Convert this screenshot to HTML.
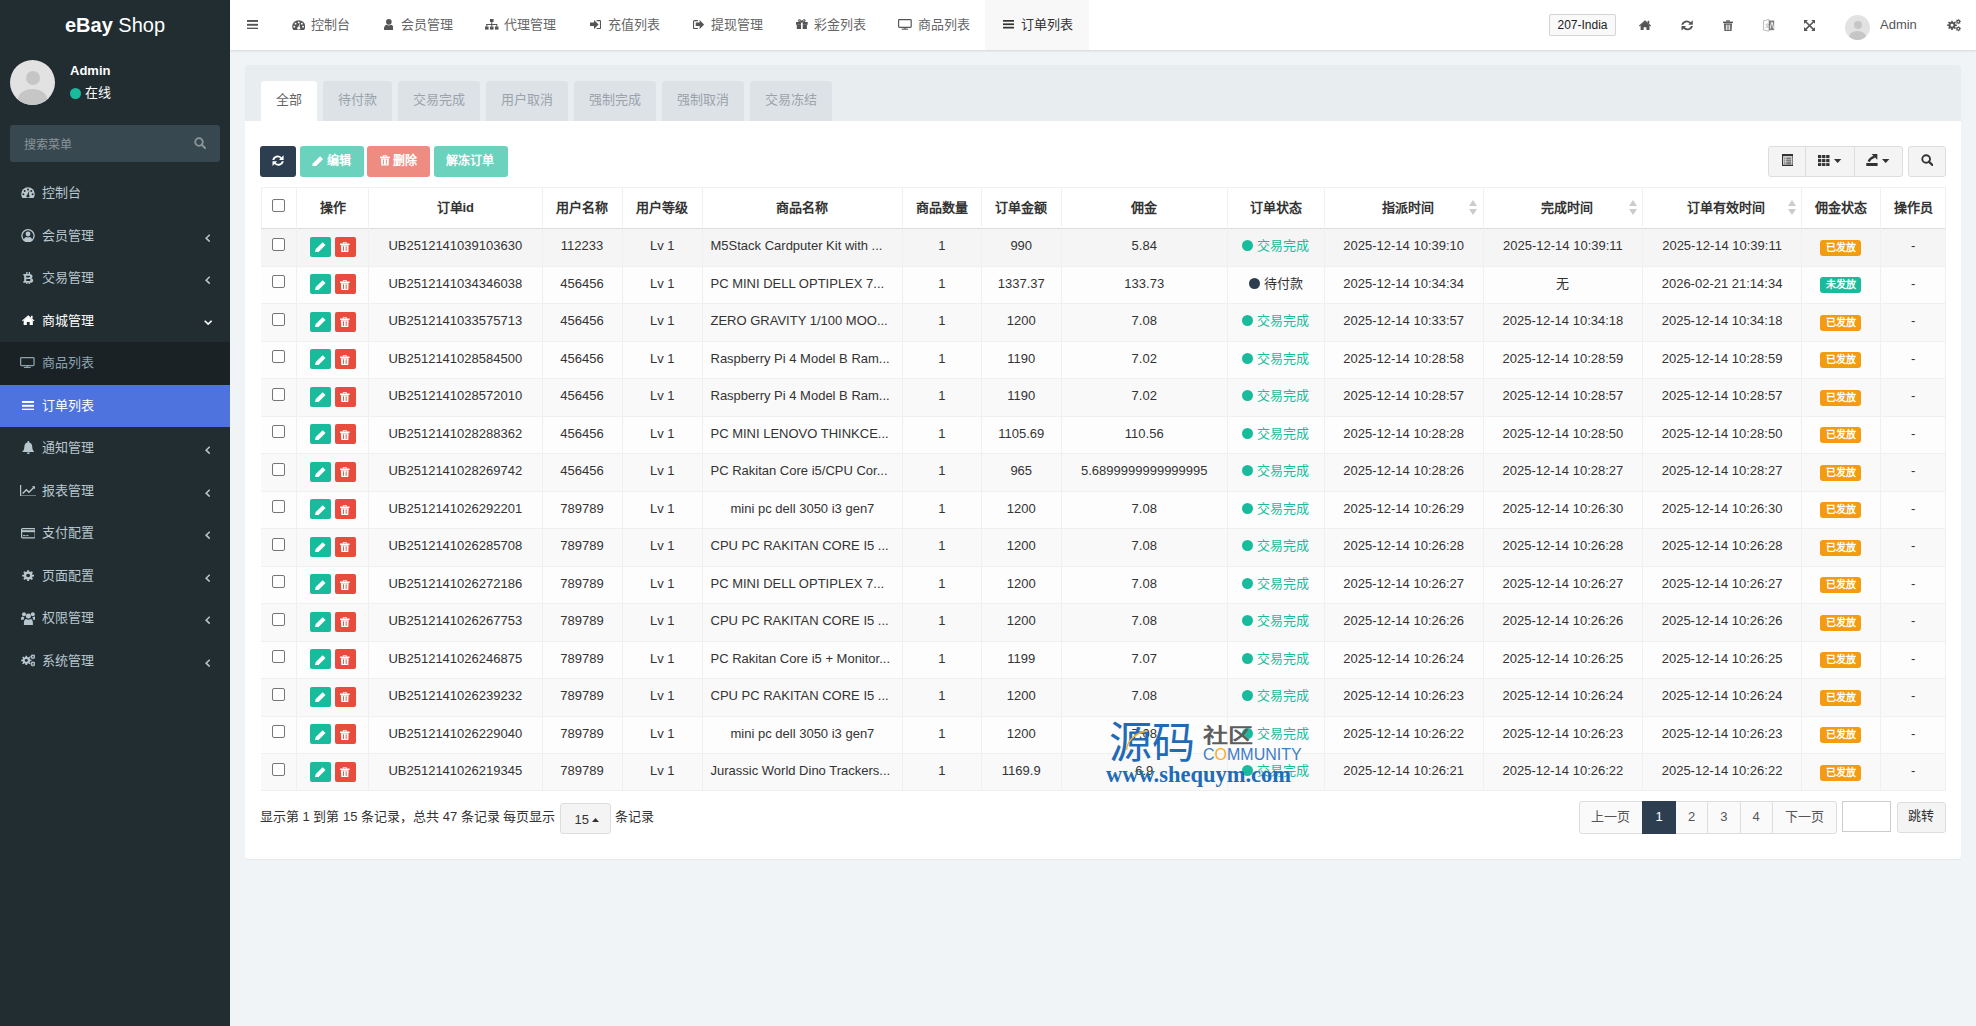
<!DOCTYPE html><html lang="zh-CN"><head><meta charset="utf-8"><style>
*{box-sizing:border-box;margin:0;padding:0}
html,body{width:1976px;height:1026px;overflow:hidden}
body{font-family:"Liberation Sans",sans-serif;font-size:13px;color:#333;background:#f1f4f6;position:relative}
.abs{position:absolute}
#sb{position:absolute;left:0;top:0;width:230px;height:1026px;background:#222d32}
.logo{position:absolute;left:0;top:0;width:230px;height:50px;line-height:50px;text-align:center;color:#fff;font-size:20px}
.mi{position:absolute;left:0;width:230px;height:42.5px;color:#b8c7ce;font-size:13px}
.mi .t{position:absolute;left:42px;top:0;line-height:42.5px}
.mi .ic{position:absolute;left:21px;top:0;height:42.5px;display:flex;align-items:center}
.mi .ar{position:absolute;left:204px;top:0;height:42.5px;display:flex;align-items:center}
#hd{position:absolute;left:230px;top:0;width:1746px;height:50px;background:#fff;box-shadow:0 1px 2px rgba(0,0,0,.12)}
.nv{position:absolute;top:0;height:50px;line-height:50px;color:#666;font-size:13px;white-space:nowrap}
.nvi{position:absolute;top:0;height:50px;display:flex;align-items:center}
#panel{position:absolute;left:245px;top:65px;width:1716px;height:794px;background:#fff;border-radius:3px;box-shadow:0 1px 1px rgba(0,0,0,.05)}
#ph{position:absolute;left:245px;top:65px;width:1716px;height:56px;background:#e8edf0;border-radius:3px 3px 0 0}
.tab{position:absolute;top:81px;height:40px;line-height:38px;background:#dde2e7;color:#9aa3ab;font-size:13px;text-align:center;border-radius:3px 3px 0 0}
.tab.on{background:#fff;color:#666}
.btn{position:absolute;top:146px;height:31px;line-height:30px;border-radius:3px;color:#fff;font-size:13px;text-align:center;white-space:nowrap}
.cell{position:absolute;text-align:center;white-space:nowrap;overflow:hidden}
.th{font-weight:bold;color:#333}
.tb{top:146px;height:31px;line-height:30px;color:#fff;font-size:12px;font-weight:bold;white-space:nowrap}
.pg{position:absolute;top:801px;height:33px;line-height:29px;text-align:center;background:#fafafa;border:1px solid #ddd;color:#555;margin-left:-1px}
</style></head><body>
<div id="sb">
<div class="logo"><b>eBay</b> Shop</div>
<div class="abs" style="left:10px;top:60px;width:45px;height:45px;border-radius:50%;background:#e2e2e2;overflow:hidden"><div class="abs" style="left:15.5px;top:10.5px;width:14px;height:14px;border-radius:50%;background:#c6c6c6"></div><div class="abs" style="left:8px;top:29px;width:29px;height:20px;border-radius:50%;background:#c6c6c6"></div></div>
<div class="abs" style="left:70px;top:62px;color:#fff;font-weight:bold;font-size:13px;line-height:18px">Admin</div>
<div class="abs" style="left:70px;top:88px;width:11px;height:11px;border-radius:50%;background:#18bc9c"></div>
<div class="abs" style="left:85px;top:84px;color:#fff;font-size:13px;line-height:18px">在线</div>
<div class="abs" style="left:10px;top:125px;width:210px;height:37px;background:#374850;border-radius:3px"></div>
<div class="abs" style="left:24px;top:135.5px;color:#8b9499;font-size:12px;line-height:18px">搜索菜单</div>
<div class="abs" style="left:194px;top:137px"><svg width="12" height="12" viewBox="0 0 12 12" ><circle cx="5" cy="5" r="3.8" fill="none" stroke="#8b9499" stroke-width="1.8"/><path d="M7.8 7.8L11 11" stroke="#8b9499" stroke-width="2" stroke-linecap="round"/></svg></div>
<div class="mi" style="top:172.0px;color:#b8c7ce">
<div class="t">控制台</div>
</div>
<svg class="abs" style="left:21px;top:187px" width="14" height="11" viewBox="0 0 14 11" preserveAspectRatio="none"><path d="M7 0.3A6.8 6.8 0 0 0 0.2 7.1c0 1.45.45 2.8 1.2 3.9h11.2c.75-1.1 1.2-2.45 1.2-3.9A6.8 6.8 0 0 0 7 0.3z" fill="#b8c7ce"/><g fill="#222d32"><circle cx="2.4" cy="7.3" r="1"/><circle cx="3.7" cy="4" r="1"/><circle cx="7" cy="2.6" r="1"/><circle cx="10.3" cy="4" r="1"/><circle cx="11.6" cy="7.3" r="1"/><path d="M8.3 3.2L7.9 8.6L6.1 8.6Z"/><circle cx="7" cy="9" r="1.6"/></g></svg>
<div class="mi" style="top:214.5px;color:#b8c7ce">
<div class="t">会员管理</div>
</div>
<svg class="abs" style="left:21px;top:228.5px" width="14" height="13.5" viewBox="0 0 14 13.5" preserveAspectRatio="none"><circle cx="7" cy="6.75" r="6.1" fill="none" stroke="#b8c7ce" stroke-width="1.3"/><circle cx="7" cy="5" r="2.4" fill="#b8c7ce"/><path d="M2.6 10.8C3.2 8.9 4.6 8 5.3 7.9 5.8 8.2 6.4 8.4 7 8.4S8.2 8.2 8.7 7.9C9.4 8 10.8 8.9 11.4 10.8 10.3 12 8.7 12.9 7 12.9S3.7 12 2.6 10.8Z" fill="#b8c7ce"/></svg>
<svg class="abs" style="left:205px;top:233.8px" width="5.4" height="8.3" viewBox="0 0 5.4 8.3"><path d="M4.7 .7L1.1 4.15L4.7 7.6" fill="none" stroke="#b8c7ce" stroke-width="1.5"/></svg>
<div class="mi" style="top:257.0px;color:#b8c7ce">
<div class="t">交易管理</div>
</div>
<svg class="abs" style="left:23px;top:271.6px" width="10.5" height="12.6" viewBox="0 0 10.5 12.6" preserveAspectRatio="none"><path fill="#b8c7ce" fill-rule="evenodd" d="M0.3 2H6.5C8.6 2 9.5 3.1 9.5 4.4C9.5 5.3 9 5.9 8.2 6.2C9.3 6.5 10.2 7.3 10.2 8.5C10.2 10 9 10.8 6.8 10.8H0.3V9.3H1.2V3.5H0.3Z M3.2 3.7V5.5H6C6.6 5.5 7.1 5.2 7.1 4.6C7.1 4 6.6 3.7 6 3.7Z M3.2 7.1V9.1H6.3C7 9.1 7.5 8.8 7.5 8.1C7.5 7.4 7 7.1 6.3 7.1Z"/><g fill="#b8c7ce"><rect x="3.2" y="0" width="1.3" height="2.2"/><rect x="5.7" y="0" width="1.3" height="2.2"/><rect x="3.2" y="10.6" width="1.3" height="2"/><rect x="5.7" y="10.6" width="1.3" height="2"/></g></svg>
<svg class="abs" style="left:205px;top:276.3px" width="5.4" height="8.3" viewBox="0 0 5.4 8.3"><path d="M4.7 .7L1.1 4.15L4.7 7.6" fill="none" stroke="#b8c7ce" stroke-width="1.5"/></svg>
<div class="mi" style="top:299.5px;color:#fff">
<div class="t">商城管理</div>
</div>
<svg class="abs" style="left:22px;top:315px" width="12.5" height="10" viewBox="0 0 12 10.4" preserveAspectRatio="none"><g fill="#fff"><path d="M6 1.6L1.6 5.4V10.4H4.6V7.2H7.4V10.4H10.4V5.4Z"/><path d="M0 5.6L6 0.3L12 5.6L11.3 6.4L6 1.8L0.7 6.4Z"/><rect x="8.6" y="0.8" width="1.6" height="2.8"/></g></svg>
<svg class="abs" style="left:203.8px;top:319.8px" width="8.3" height="5" viewBox="0 0 8.3 5"><path d="M.7 .7L4.15 4.1L7.6 .7" fill="none" stroke="#fff" stroke-width="1.6"/></svg>
<div class="mi" style="top:342.0px;background:#1a2226;color:#8aa4af">
<div class="t">商品列表</div>
</div>
<svg class="abs" style="left:20.2px;top:357px" width="14.7" height="11" viewBox="0 0 14 11" preserveAspectRatio="none"><rect x="0.6" y="0.6" width="12.8" height="8" rx="0.8" fill="none" stroke="#8aa4af" stroke-width="1.2"/><rect x="6.4" y="8.6" width="1.2" height="1.6" fill="#8aa4af"/><rect x="3.8" y="9.9" width="6.4" height="1.1" fill="#8aa4af"/></svg>
<div class="mi" style="top:384.5px;background:#4e73df;color:#fff">
<div class="t">订单列表</div>
</div>
<svg class="abs" style="left:21.8px;top:400.6px" width="12.3" height="9.6" viewBox="0 0 12 10" preserveAspectRatio="none"><g fill="#fff"><rect x="0" y="0" width="12" height="2"/><rect x="0" y="4" width="12" height="2"/><rect x="0" y="8" width="12" height="2"/></g></svg>
<div class="mi" style="top:427.0px;color:#b8c7ce">
<div class="t">通知管理</div>
</div>
<svg class="abs" style="left:21.8px;top:440.7px" width="12.6" height="13.2" viewBox="0 0 12.6 13" preserveAspectRatio="none"><path d="M6.3 1.2C3.6 1.2 2.3 3.4 2.3 6.2 2.3 8.6 1.4 9.6 0.2 10.8H12.4C11.2 9.6 10.3 8.6 10.3 6.2 10.3 3.4 9 1.2 6.3 1.2Z" fill="#b8c7ce"/><circle cx="6.3" cy="1" r="1" fill="#b8c7ce"/><path d="M4.8 11.3A1.5 1.5 0 0 0 7.8 11.3Z" fill="#b8c7ce"/></svg>
<svg class="abs" style="left:205px;top:446.3px" width="5.4" height="8.3" viewBox="0 0 5.4 8.3"><path d="M4.7 .7L1.1 4.15L4.7 7.6" fill="none" stroke="#b8c7ce" stroke-width="1.5"/></svg>
<div class="mi" style="top:469.5px;color:#b8c7ce">
<div class="t">报表管理</div>
</div>
<svg class="abs" style="left:20px;top:484.6px" width="16" height="11.4" viewBox="0 0 16 11.6" preserveAspectRatio="none"><path d="M.6 0V11.2H16" fill="none" stroke="#b8c7ce" stroke-width="1.2"/><path d="M2.6 8.6L6.4 4.8L9 7.4L14 2.4" fill="none" stroke="#b8c7ce" stroke-width="1.4"/><path d="M11.8 1.2H15V4.4Z" fill="#b8c7ce"/></svg>
<svg class="abs" style="left:205px;top:488.8px" width="5.4" height="8.3" viewBox="0 0 5.4 8.3"><path d="M4.7 .7L1.1 4.15L4.7 7.6" fill="none" stroke="#b8c7ce" stroke-width="1.5"/></svg>
<div class="mi" style="top:512.0px;color:#b8c7ce">
<div class="t">支付配置</div>
</div>
<svg class="abs" style="left:20.7px;top:528.1px" width="14.8" height="10.5" viewBox="0 0 14.8 10.6" preserveAspectRatio="none"><rect x=".6" y=".6" width="13.6" height="9.4" rx="1" fill="none" stroke="#b8c7ce" stroke-width="1.2"/><rect x="0.6" y="2.2" width="13.6" height="2" fill="#b8c7ce"/><rect x="2" y="7.2" width="2.6" height="1" fill="#b8c7ce"/><rect x="5.3" y="7.2" width="2.2" height="1" fill="#b8c7ce"/></svg>
<svg class="abs" style="left:205px;top:531.3px" width="5.4" height="8.3" viewBox="0 0 5.4 8.3"><path d="M4.7 .7L1.1 4.15L4.7 7.6" fill="none" stroke="#b8c7ce" stroke-width="1.5"/></svg>
<div class="mi" style="top:554.5px;color:#b8c7ce">
<div class="t">页面配置</div>
</div>
<svg class="abs" style="left:21.8px;top:569.8px" width="12.3" height="11.2" viewBox="0 0 12 12" preserveAspectRatio="none"><path fill="#b8c7ce" fill-rule="evenodd" d="M10.28 4.97 L11.83 5.08 L11.83 6.92 L10.28 7.03 L9.75 8.30 L10.77 9.47 L9.47 10.77 L8.30 9.75 L7.03 10.28 L6.92 11.83 L5.08 11.83 L4.97 10.28 L3.70 9.75 L2.53 10.77 L1.23 9.47 L2.25 8.30 L1.72 7.03 L0.17 6.92 L0.17 5.08 L1.72 4.97 L2.25 3.70 L1.23 2.53 L2.53 1.23 L3.70 2.25 L4.97 1.72 L5.08 0.17 L6.92 0.17 L7.03 1.72 L8.30 2.25 L9.47 1.23 L10.77 2.53 L9.75 3.70Z M7.90 6.00 A1.9 1.9 0 1 0 4.10 6.00 A1.9 1.9 0 1 0 7.90 6.00Z"/></svg>
<svg class="abs" style="left:205px;top:573.8px" width="5.4" height="8.3" viewBox="0 0 5.4 8.3"><path d="M4.7 .7L1.1 4.15L4.7 7.6" fill="none" stroke="#b8c7ce" stroke-width="1.5"/></svg>
<div class="mi" style="top:597.0px;color:#b8c7ce">
<div class="t">权限管理</div>
</div>
<svg class="abs" style="left:20.7px;top:611.9px" width="14.8" height="13.1" viewBox="0 0 14.8 13" preserveAspectRatio="none"><g fill="#b8c7ce"><circle cx="3" cy="2.2" r="2"/><circle cx="11.8" cy="2.2" r="2"/><path d="M0 6.8C0 5.3.8 4.6 1.6 4.5 2.2 5 2.6 5.1 3.4 5.1 3 5.6 2.8 6.2 2.8 7.6H0Z"/><path d="M14.8 6.8C14.8 5.3 14 4.6 13.2 4.5 12.6 5 12.2 5.1 11.4 5.1 11.8 5.6 12 6.2 12 7.6H14.8Z"/><circle cx="7.4" cy="4" r="2.5"/><path d="M2.9 13V10.6C2.9 8.4 4 7.1 5.2 6.9 5.8 7.4 6.6 7.7 7.4 7.7S9 7.4 9.6 6.9C10.8 7.1 11.9 8.4 11.9 10.6V13Z"/></g></svg>
<svg class="abs" style="left:205px;top:616.3px" width="5.4" height="8.3" viewBox="0 0 5.4 8.3"><path d="M4.7 .7L1.1 4.15L4.7 7.6" fill="none" stroke="#b8c7ce" stroke-width="1.5"/></svg>
<div class="mi" style="top:639.5px;color:#b8c7ce">
<div class="t">系统管理</div>
</div>
<svg class="abs" style="left:20.7px;top:654px" width="14.8" height="12.6" viewBox="0 0 14 13" preserveAspectRatio="none"><path fill="#b8c7ce" fill-rule="evenodd" d="M8.50 5.76 L9.84 5.83 L9.84 7.37 L8.50 7.44 L8.07 8.48 L8.96 9.48 L7.88 10.56 L6.88 9.67 L5.84 10.10 L5.77 11.44 L4.23 11.44 L4.16 10.10 L3.12 9.67 L2.12 10.56 L1.04 9.48 L1.93 8.48 L1.50 7.44 L0.16 7.37 L0.16 5.83 L1.50 5.76 L1.93 4.72 L1.04 3.72 L2.12 2.64 L3.12 3.53 L4.16 3.10 L4.23 1.76 L5.77 1.76 L5.84 3.10 L6.88 3.53 L7.88 2.64 L8.96 3.72 L8.07 4.72Z M6.50 6.60 A1.5 1.5 0 1 0 3.50 6.60 A1.5 1.5 0 1 0 6.50 6.60Z"/><path fill="#b8c7ce" fill-rule="evenodd" d="M13.15 2.36 L13.97 2.38 L13.97 3.22 L13.15 3.24 L12.92 3.79 L13.48 4.39 L12.89 4.98 L12.29 4.42 L11.74 4.65 L11.72 5.47 L10.88 5.47 L10.86 4.65 L10.31 4.42 L9.71 4.98 L9.12 4.39 L9.68 3.79 L9.45 3.24 L8.63 3.22 L8.63 2.38 L9.45 2.36 L9.68 1.81 L9.12 1.21 L9.71 0.62 L10.31 1.18 L10.86 0.95 L10.88 0.13 L11.72 0.13 L11.74 0.95 L12.29 1.18 L12.89 0.62 L13.48 1.21 L12.92 1.81Z M12.10 2.80 A0.8 0.8 0 1 0 10.50 2.80 A0.8 0.8 0 1 0 12.10 2.80Z"/><path fill="#b8c7ce" fill-rule="evenodd" d="M13.15 9.76 L13.97 9.78 L13.97 10.62 L13.15 10.64 L12.92 11.19 L13.48 11.79 L12.89 12.38 L12.29 11.82 L11.74 12.05 L11.72 12.87 L10.88 12.87 L10.86 12.05 L10.31 11.82 L9.71 12.38 L9.12 11.79 L9.68 11.19 L9.45 10.64 L8.63 10.62 L8.63 9.78 L9.45 9.76 L9.68 9.21 L9.12 8.61 L9.71 8.02 L10.31 8.58 L10.86 8.35 L10.88 7.53 L11.72 7.53 L11.74 8.35 L12.29 8.58 L12.89 8.02 L13.48 8.61 L12.92 9.21Z M12.10 10.20 A0.8 0.8 0 1 0 10.50 10.20 A0.8 0.8 0 1 0 12.10 10.20Z"/></svg>
<svg class="abs" style="left:205px;top:658.8px" width="5.4" height="8.3" viewBox="0 0 5.4 8.3"><path d="M4.7 .7L1.1 4.15L4.7 7.6" fill="none" stroke="#b8c7ce" stroke-width="1.5"/></svg>
</div>
<div id="hd"></div>
<svg class="abs" style="left:246.9px;top:19.7px" width="11.3" height="9.6" viewBox="0 0 12 10" preserveAspectRatio="none"><g fill="#555"><rect x="0" y="0" width="12" height="2"/><rect x="0" y="4" width="12" height="2"/><rect x="0" y="8" width="12" height="2"/></g></svg>
<div class="abs" style="left:985px;top:0;width:103.5px;height:50px;background:#f8f8f8"></div>
<svg class="abs" style="left:291.8px;top:19.7px" width="13.4" height="10.1" viewBox="0 0 14 11" preserveAspectRatio="none"><path d="M7 0.3A6.8 6.8 0 0 0 0.2 7.1c0 1.45.45 2.8 1.2 3.9h11.2c.75-1.1 1.2-2.45 1.2-3.9A6.8 6.8 0 0 0 7 0.3z" fill="#555"/><g fill="#fff"><circle cx="2.4" cy="7.3" r="1"/><circle cx="3.7" cy="4" r="1"/><circle cx="7" cy="2.6" r="1"/><circle cx="10.3" cy="4" r="1"/><circle cx="11.6" cy="7.3" r="1"/><path d="M8.3 3.2L7.9 8.6L6.1 8.6Z"/><circle cx="7" cy="9" r="1.6"/></g></svg>
<div class="nv" style="left:311px;color:#666">控制台</div>
<svg class="abs" style="left:383.7px;top:18.9px" width="9.7" height="10.9" viewBox="0 0 10 11" preserveAspectRatio="none"><g fill="#555"><circle cx="5" cy="2.9" r="2.9"/><path d="M0 11V9.6C0 7.4 1.3 6 2.9 5.8 3.5 6.3 4.2 6.5 5 6.5S6.5 6.3 7.1 5.8C8.7 6 10 7.4 10 9.6V11Z"/></g></svg>
<div class="nv" style="left:401px;color:#666">会员管理</div>
<svg class="abs" style="left:485.3px;top:19.1px" width="13.5" height="10.6" viewBox="0 0 13.6 10.6" preserveAspectRatio="none"><g fill="#555"><rect x="5" y="0" width="3.6" height="3"/><rect x="6.3" y="3" width="1" height="2.3"/><rect x="1.3" y="5" width="11" height="1"/><rect x="1.3" y="5" width="1" height="2.5"/><rect x="6.3" y="5" width="1" height="2.5"/><rect x="11.3" y="5" width="1" height="2.5"/><rect x="0" y="7.5" width="3.6" height="3.1"/><rect x="5" y="7.5" width="3.6" height="3.1"/><rect x="10" y="7.5" width="3.6" height="3.1"/></g></svg>
<div class="nv" style="left:504px;color:#666">代理管理</div>
<svg class="abs" style="left:589.8px;top:19.8px" width="11" height="9.2" viewBox="0 0 11 9.2" preserveAspectRatio="none"><path d="M0 2.4H3.95V0.1L8.6 4.6L3.95 9.1V6H0Z" fill="#555"/><path d="M6.6 0.6H9.8C10.2 0.6 10.5 0.9 10.5 1.3V7.9C10.5 8.3 10.2 8.6 9.8 8.6H6.6" fill="none" stroke="#555" stroke-width="1.1"/></svg>
<div class="nv" style="left:607.5px;color:#666">充值列表</div>
<svg class="abs" style="left:692.8px;top:19.8px" width="11.3" height="9.2" viewBox="0 0 11.3 9.2" preserveAspectRatio="none"><path d="M2.75 2.4H6.65V0.1L11.2 4.6L6.65 9.1V6H2.75Z" fill="#555"/><path d="M4.9 0.6H1.3C.9 0.6 .55 .9 .55 1.3V7.9C.55 8.3 .9 8.6 1.3 8.6H4.9" fill="none" stroke="#555" stroke-width="1.1"/></svg>
<div class="nv" style="left:710.8px;color:#666">提现管理</div>
<svg class="abs" style="left:796.3px;top:18.7px" width="11.7" height="10.3" viewBox="0 0 11.7 10.3" preserveAspectRatio="none"><g fill="#555"><rect x="0" y="3" width="11.7" height="2.8"/><rect x="0.8" y="5.8" width="10.1" height="4.5"/></g><rect x="5" y="3" width="1.7" height="7.3" fill="#fff"/><path d="M5.85 3C4.5 .2 2.6 .2 2.6 1.6 2.6 2.7 4 3 5.85 3 7.7 3 9.1 2.7 9.1 1.6 9.1.2 7.2.2 5.85 3Z" fill="none" stroke="#555" stroke-width="1.1"/></svg>
<div class="nv" style="left:814px;color:#666">彩金列表</div>
<svg class="abs" style="left:897.9px;top:19.1px" width="13.8" height="10.7" viewBox="0 0 14 11" preserveAspectRatio="none"><rect x="0.6" y="0.6" width="12.8" height="8" rx="0.8" fill="none" stroke="#555" stroke-width="1.2"/><rect x="6.4" y="8.6" width="1.2" height="1.6" fill="#555"/><rect x="3.8" y="9.9" width="6.4" height="1.1" fill="#555"/></svg>
<div class="nv" style="left:918px;color:#666">商品列表</div>
<svg class="abs" style="left:1002.6px;top:20.2px" width="11.4" height="8.5" viewBox="0 0 12 10" preserveAspectRatio="none"><g fill="#333"><rect x="0" y="0" width="12" height="2"/><rect x="0" y="4" width="12" height="2"/><rect x="0" y="8" width="12" height="2"/></g></svg>
<div class="nv" style="left:1021px;color:#333">订单列表</div>
<div class="abs" style="left:1549px;top:14px;width:67px;height:22px;border:1px solid #d4d4d4;border-radius:2px;background:#f9f9f9;font-size:12px;line-height:20px;text-align:center;color:#222">207-India</div>
<svg class="abs" style="left:1638.9px;top:19.6px" width="12.1" height="10.4" viewBox="0 0 12 10.4" preserveAspectRatio="none"><g fill="#555"><path d="M6 1.6L1.6 5.4V10.4H4.6V7.2H7.4V10.4H10.4V5.4Z"/><path d="M0 5.6L6 0.3L12 5.6L11.3 6.4L6 1.8L0.7 6.4Z"/><rect x="8.6" y="0.8" width="1.6" height="2.8"/></g></svg>
<svg class="abs" style="left:1681px;top:19.9px" width="12.3" height="10.8" viewBox="0 0 12.3 11" preserveAspectRatio="none"><g fill="#555"><path d="M0.2 4.9A5.6 5.6 0 0 1 9.7 2.2L11.8 0.2V4.8H7.2L8.5 3.5A3.7 3.7 0 0 0 2.3 4.9Z"/><path d="M12.1 6.1A5.6 5.6 0 0 1 2.6 8.8L0.5 10.8V6.2H5.1L3.8 7.5A3.7 3.7 0 0 0 10 6.1Z"/></g></svg>
<svg class="abs" style="left:1723px;top:19.6px" width="10" height="11.4" viewBox="0 0 10 11.4" preserveAspectRatio="none"><g fill="#555"><rect x="0" y="1.6" width="10" height="1.5"/><path d="M3.2 1.8V0.3H6.8V1.8H5.7V1.2H4.3V1.8Z"/><path d="M1 3.4H9L8.5 11.4H1.5Z"/></g><g fill="#fff"><rect x="2.8" y="4.6" width="1" height="5.6"/><rect x="4.5" y="4.6" width="1" height="5.6"/><rect x="6.2" y="4.6" width="1" height="5.6"/></g></svg>
<svg class="abs" style="left:1763px;top:19px" width="11.7" height="12.7" viewBox="0 0 11.7 12.7" preserveAspectRatio="none"><path d="M.5 1.8L6 .5V12.2L.5 11Z" fill="none" stroke="#555" stroke-width=".7" opacity=".55"/><path d="M6 1.5H11.2V11.2H6Z" fill="#555" opacity=".75"/><path d="M7.2 9.5L8.6 3.5H9.3L10.6 9.5" fill="none" stroke="#fff" stroke-width=".9"/><text x="1.6" y="7.8" font-size="4.5" fill="#555" opacity=".6" font-family="Liberation Sans">文</text></svg>
<svg class="abs" style="left:1804px;top:19.9px" width="11.2" height="11.1" viewBox="0 0 11.2 11" preserveAspectRatio="none"><g fill="#555"><path d="M0 0H4L0 4Z"/><path d="M11.2 0H7.2L11.2 4Z"/><path d="M0 11H4L0 7Z"/><path d="M11.2 11H7.2L11.2 7Z"/></g><path d="M1.2 1.2L10 9.8M10 1.2L1.2 9.8" stroke="#555" stroke-width="1.6"/></svg>
<div class="abs" style="left:1845px;top:15px;width:25px;height:25px;border-radius:50%;background:#e2e2e2;overflow:hidden"><div class="abs" style="left:8.5px;top:5.5px;width:8px;height:8px;border-radius:50%;background:#c6c6c6"></div><div class="abs" style="left:4px;top:16px;width:17px;height:12px;border-radius:50%;background:#c6c6c6"></div></div>
<div class="nv" style="left:1880px;color:#555">Admin</div>
<svg class="abs" style="left:1947.2px;top:19.2px" width="14" height="12.4" viewBox="0 0 14 13" preserveAspectRatio="none"><path fill="#555" fill-rule="evenodd" d="M8.50 5.76 L9.84 5.83 L9.84 7.37 L8.50 7.44 L8.07 8.48 L8.96 9.48 L7.88 10.56 L6.88 9.67 L5.84 10.10 L5.77 11.44 L4.23 11.44 L4.16 10.10 L3.12 9.67 L2.12 10.56 L1.04 9.48 L1.93 8.48 L1.50 7.44 L0.16 7.37 L0.16 5.83 L1.50 5.76 L1.93 4.72 L1.04 3.72 L2.12 2.64 L3.12 3.53 L4.16 3.10 L4.23 1.76 L5.77 1.76 L5.84 3.10 L6.88 3.53 L7.88 2.64 L8.96 3.72 L8.07 4.72Z M6.50 6.60 A1.5 1.5 0 1 0 3.50 6.60 A1.5 1.5 0 1 0 6.50 6.60Z"/><path fill="#555" fill-rule="evenodd" d="M13.15 2.36 L13.97 2.38 L13.97 3.22 L13.15 3.24 L12.92 3.79 L13.48 4.39 L12.89 4.98 L12.29 4.42 L11.74 4.65 L11.72 5.47 L10.88 5.47 L10.86 4.65 L10.31 4.42 L9.71 4.98 L9.12 4.39 L9.68 3.79 L9.45 3.24 L8.63 3.22 L8.63 2.38 L9.45 2.36 L9.68 1.81 L9.12 1.21 L9.71 0.62 L10.31 1.18 L10.86 0.95 L10.88 0.13 L11.72 0.13 L11.74 0.95 L12.29 1.18 L12.89 0.62 L13.48 1.21 L12.92 1.81Z M12.10 2.80 A0.8 0.8 0 1 0 10.50 2.80 A0.8 0.8 0 1 0 12.10 2.80Z"/><path fill="#555" fill-rule="evenodd" d="M13.15 9.76 L13.97 9.78 L13.97 10.62 L13.15 10.64 L12.92 11.19 L13.48 11.79 L12.89 12.38 L12.29 11.82 L11.74 12.05 L11.72 12.87 L10.88 12.87 L10.86 12.05 L10.31 11.82 L9.71 12.38 L9.12 11.79 L9.68 11.19 L9.45 10.64 L8.63 10.62 L8.63 9.78 L9.45 9.76 L9.68 9.21 L9.12 8.61 L9.71 8.02 L10.31 8.58 L10.86 8.35 L10.88 7.53 L11.72 7.53 L11.74 8.35 L12.29 8.58 L12.89 8.02 L13.48 8.61 L12.92 9.21Z M12.10 10.20 A0.8 0.8 0 1 0 10.50 10.20 A0.8 0.8 0 1 0 12.10 10.20Z"/></svg>
<div id="panel"></div><div id="ph"></div>
<div class="tab on" style="left:261px;width:56px">全部</div>
<div class="tab" style="left:323px;width:69px">待付款</div>
<div class="tab" style="left:398px;width:82px">交易完成</div>
<div class="tab" style="left:486px;width:82px">用户取消</div>
<div class="tab" style="left:574px;width:82px">强制完成</div>
<div class="tab" style="left:662px;width:82px">强制取消</div>
<div class="tab" style="left:750px;width:82px">交易冻结</div>
<div class="btn" style="left:260px;width:36px;background:#2c3e50"></div>
<svg class="abs" style="left:272.1px;top:155.1px" width="12.1" height="11.2" viewBox="0 0 12.3 11" preserveAspectRatio="none"><g fill="#fff"><path d="M0.2 4.9A5.6 5.6 0 0 1 9.7 2.2L11.8 0.2V4.8H7.2L8.5 3.5A3.7 3.7 0 0 0 2.3 4.9Z"/><path d="M12.1 6.1A5.6 5.6 0 0 1 2.6 8.8L0.5 10.8V6.2H5.1L3.8 7.5A3.7 3.7 0 0 0 10 6.1Z"/></g></svg>
<div class="btn" style="left:300px;width:64px;background:#6ad2bd"></div>
<svg class="abs" style="left:312.2px;top:155.5px" width="11.2" height="10.5" viewBox="0 0 10.5 10" preserveAspectRatio="none"><path d="M0 10L0.7 7.1L7.6 0.2L10.4 3L3.5 9.9Z" fill="#fff"/></svg>
<div class="abs tb" style="left:326.5px">编辑</div>
<div class="btn" style="left:367px;width:63px;background:#ef8c82"></div>
<svg class="abs" style="left:380px;top:155.3px" width="9.9" height="10.6" viewBox="0 0 9.6 10" preserveAspectRatio="none"><g fill="#fff"><rect x="0" y="1.5" width="9.6" height="1.5"/><path d="M2.8 1.8V0.2H6.8V1.8H5.8V1.1H3.8V1.8Z"/><path d="M0.9 3.2H8.7L8.3 10H1.3Z"/></g><g fill="#ef8c82"><rect x="3" y="4.3" width="0.9" height="4.6"/><rect x="5.7" y="4.3" width="0.9" height="4.6"/></g></svg>
<div class="abs tb" style="left:392.5px">删除</div>
<div class="btn" style="left:434px;width:74px;background:#6ad2bd"></div>
<div class="abs tb" style="left:446px">解冻订单</div>
<div class="abs" style="left:1768px;top:146px;width:134.5px;height:31px;border:1px solid #ddd;border-radius:3px;background:#f4f4f4"></div>
<div class="abs" style="left:1805px;top:146px;width:1px;height:31px;background:#ddd"></div>
<div class="abs" style="left:1854px;top:146px;width:1px;height:31px;background:#ddd"></div>
<div class="abs" style="left:1908px;top:146px;width:38px;height:31px;border:1px solid #ddd;border-radius:3px;background:#f4f4f4"></div>
<svg class="abs" style="left:1781.9px;top:154.1px" width="11.6" height="12" viewBox="0 0 11.6 12" preserveAspectRatio="none"><rect x=".6" y=".6" width="10.4" height="10.8" fill="none" stroke="#333" stroke-width="1.2"/><rect x=".6" y=".6" width="10.4" height="1.6" fill="#333"/><g fill="#333"><rect x="2.2" y="3.6" width="1.3" height="1"/><rect x="4.2" y="3.6" width="5.2" height="1"/><rect x="2.2" y="5.6" width="1.3" height="1"/><rect x="4.2" y="5.6" width="5.2" height="1"/><rect x="2.2" y="7.6" width="1.3" height="1"/><rect x="4.2" y="7.6" width="5.2" height="1"/><rect x="2.2" y="9.4" width="1.3" height="1"/><rect x="4.2" y="9.4" width="5.2" height="1"/></g></svg>
<svg class="abs" style="left:1818.1px;top:155px" width="11.7" height="11.2" viewBox="0 0 11.7 11.2" preserveAspectRatio="none"><g fill="#333"><rect x="0.0" y="0.0" width="3.3" height="3.1"/><rect x="0.0" y="4.05" width="3.3" height="3.1"/><rect x="0.0" y="8.1" width="3.3" height="3.1"/><rect x="4.1" y="0.0" width="3.3" height="3.1"/><rect x="4.1" y="4.05" width="3.3" height="3.1"/><rect x="4.1" y="8.1" width="3.3" height="3.1"/><rect x="8.2" y="0.0" width="3.3" height="3.1"/><rect x="8.2" y="4.05" width="3.3" height="3.1"/><rect x="8.2" y="8.1" width="3.3" height="3.1"/></g></svg>
<svg class="abs" style="left:1834.3px;top:159px" width="7.3" height="4.1" viewBox="0 0 7.4 4.1" preserveAspectRatio="none"><path d="M0 0H7.4L3.7 4.1Z" fill="#333"/></svg>
<svg class="abs" style="left:1866.4px;top:154.1px" width="11.6" height="12" viewBox="0 0 11.6 12" preserveAspectRatio="none"><g fill="#333"><rect x="0.3" y="9" width="11.3" height="3"/><path d="M5.6 0H11.3V5.7Z"/></g><path d="M2.6 7.6C3.4 5.6 5.6 3.6 8.6 2.6" fill="none" stroke="#333" stroke-width="2.2"/></svg>
<svg class="abs" style="left:1882.3px;top:159px" width="7.4" height="4.1" viewBox="0 0 7.4 4.1" preserveAspectRatio="none"><path d="M0 0H7.4L3.7 4.1Z" fill="#333"/></svg>
<svg class="abs" style="left:1920.8px;top:154.1px" width="12.4" height="12" viewBox="0 0 12.5 12.5" preserveAspectRatio="none"><circle cx="5.2" cy="5.2" r="3.9" fill="none" stroke="#333" stroke-width="1.9"/><path d="M8 8L11.5 11.5" stroke="#333" stroke-width="2.3" stroke-linecap="round"/></svg>
<div class="abs" style="left:260.5px;top:187px;width:1685.5px;height:603.5px;border:1px solid #f0f0f0;border-right:none;border-bottom:none"></div>
<div class="abs" style="left:260.5px;top:228.0px;width:1685.5px;height:37.5px;background:#f5f5f5;border-top:1px solid #f0f0f0"></div>
<div class="abs" style="left:260.5px;top:265.5px;width:1685.5px;height:37.5px;background:#fdfdfd;border-top:1px solid #f0f0f0"></div>
<div class="abs" style="left:260.5px;top:303.0px;width:1685.5px;height:37.5px;background:#f9f9f9;border-top:1px solid #f0f0f0"></div>
<div class="abs" style="left:260.5px;top:340.5px;width:1685.5px;height:37.5px;background:#fdfdfd;border-top:1px solid #f0f0f0"></div>
<div class="abs" style="left:260.5px;top:378.0px;width:1685.5px;height:37.5px;background:#f9f9f9;border-top:1px solid #f0f0f0"></div>
<div class="abs" style="left:260.5px;top:415.5px;width:1685.5px;height:37.5px;background:#fdfdfd;border-top:1px solid #f0f0f0"></div>
<div class="abs" style="left:260.5px;top:453.0px;width:1685.5px;height:37.5px;background:#f9f9f9;border-top:1px solid #f0f0f0"></div>
<div class="abs" style="left:260.5px;top:490.5px;width:1685.5px;height:37.5px;background:#fdfdfd;border-top:1px solid #f0f0f0"></div>
<div class="abs" style="left:260.5px;top:528.0px;width:1685.5px;height:37.5px;background:#f9f9f9;border-top:1px solid #f0f0f0"></div>
<div class="abs" style="left:260.5px;top:565.5px;width:1685.5px;height:37.5px;background:#fdfdfd;border-top:1px solid #f0f0f0"></div>
<div class="abs" style="left:260.5px;top:603.0px;width:1685.5px;height:37.5px;background:#f9f9f9;border-top:1px solid #f0f0f0"></div>
<div class="abs" style="left:260.5px;top:640.5px;width:1685.5px;height:37.5px;background:#fdfdfd;border-top:1px solid #f0f0f0"></div>
<div class="abs" style="left:260.5px;top:678.0px;width:1685.5px;height:37.5px;background:#f9f9f9;border-top:1px solid #f0f0f0"></div>
<div class="abs" style="left:260.5px;top:715.5px;width:1685.5px;height:37.5px;background:#fdfdfd;border-top:1px solid #f0f0f0"></div>
<div class="abs" style="left:260.5px;top:753.0px;width:1685.5px;height:37.5px;background:#f9f9f9;border-top:1px solid #f0f0f0"></div>
<div class="abs" style="left:260.5px;top:228px;width:1685.5px;height:1px;background:#dcdcdc"></div>
<div class="abs" style="left:260.5px;top:789.5px;width:1685.5px;height:1px;background:#f0f0f0"></div>
<div class="abs" style="left:296.0px;top:187px;width:1px;height:603.5px;background:#f0f0f0"></div>
<div class="abs" style="left:368.1px;top:187px;width:1px;height:603.5px;background:#f0f0f0"></div>
<div class="abs" style="left:541.5px;top:187px;width:1px;height:603.5px;background:#f0f0f0"></div>
<div class="abs" style="left:621.5px;top:187px;width:1px;height:603.5px;background:#f0f0f0"></div>
<div class="abs" style="left:702.0px;top:187px;width:1px;height:603.5px;background:#f0f0f0"></div>
<div class="abs" style="left:901.9px;top:187px;width:1px;height:603.5px;background:#f0f0f0"></div>
<div class="abs" style="left:981.0px;top:187px;width:1px;height:603.5px;background:#f0f0f0"></div>
<div class="abs" style="left:1060.5px;top:187px;width:1px;height:603.5px;background:#f0f0f0"></div>
<div class="abs" style="left:1227.0px;top:187px;width:1px;height:603.5px;background:#f0f0f0"></div>
<div class="abs" style="left:1323.5px;top:187px;width:1px;height:603.5px;background:#f0f0f0"></div>
<div class="abs" style="left:1482.9px;top:187px;width:1px;height:603.5px;background:#f0f0f0"></div>
<div class="abs" style="left:1642.0px;top:187px;width:1px;height:603.5px;background:#f0f0f0"></div>
<div class="abs" style="left:1801.1px;top:187px;width:1px;height:603.5px;background:#f0f0f0"></div>
<div class="abs" style="left:1880.1px;top:187px;width:1px;height:603.5px;background:#f0f0f0"></div>
<div class="abs" style="left:1945px;top:187px;width:1px;height:603.5px;background:#f0f0f0"></div>
<div class="abs" style="left:272px;top:199px;width:13px;height:13px;border:1px solid #767676;border-radius:2px;background:#fff"></div>
<div class="cell th" style="left:296.5px;top:187px;width:72.10000000000002px;height:41px;line-height:41px">操作</div>
<div class="cell th" style="left:368.6px;top:187px;width:173.39999999999998px;height:41px;line-height:41px">订单id</div>
<div class="cell th" style="left:542px;top:187px;width:80px;height:41px;line-height:41px">用户名称</div>
<div class="cell th" style="left:622px;top:187px;width:80.5px;height:41px;line-height:41px">用户等级</div>
<div class="cell th" style="left:702.5px;top:187px;width:199.89999999999998px;height:41px;line-height:41px">商品名称</div>
<div class="cell th" style="left:902.4px;top:187px;width:79.10000000000002px;height:41px;line-height:41px">商品数量</div>
<div class="cell th" style="left:981.5px;top:187px;width:79.5px;height:41px;line-height:41px">订单金额</div>
<div class="cell th" style="left:1061px;top:187px;width:166.5px;height:41px;line-height:41px">佣金</div>
<div class="cell th" style="left:1227.5px;top:187px;width:96.5px;height:41px;line-height:41px">订单状态</div>
<div class="cell th" style="left:1328px;top:187px;width:159.4000000000001px;height:41px;line-height:41px">指派时间</div>
<div class="abs" style="left:1469.4px;top:200px"><svg width="8" height="15" viewBox="0 0 8 15" ><path d="M4 0L8 6H0Z" fill="#ccc"/><path d="M4 15L8 9H0Z" fill="#ccc"/></svg></div>
<div class="cell th" style="left:1487.4px;top:187px;width:159.0999999999999px;height:41px;line-height:41px">完成时间</div>
<div class="abs" style="left:1628.5px;top:200px"><svg width="8" height="15" viewBox="0 0 8 15" ><path d="M4 0L8 6H0Z" fill="#ccc"/><path d="M4 15L8 9H0Z" fill="#ccc"/></svg></div>
<div class="cell th" style="left:1646.5px;top:187px;width:159.0999999999999px;height:41px;line-height:41px">订单有效时间</div>
<div class="abs" style="left:1787.6px;top:200px"><svg width="8" height="15" viewBox="0 0 8 15" ><path d="M4 0L8 6H0Z" fill="#ccc"/><path d="M4 15L8 9H0Z" fill="#ccc"/></svg></div>
<div class="cell th" style="left:1801.6px;top:187px;width:79.0px;height:41px;line-height:41px">佣金状态</div>
<div class="cell th" style="left:1880.6px;top:187px;width:65.40000000000009px;height:41px;line-height:41px">操作员</div>
<div class="abs" style="left:272px;top:237.75px;width:13px;height:13px;border:1px solid #767676;border-radius:2px;background:#fff"></div>
<div class="abs" style="left:310px;top:236.5px;width:21px;height:20px;border-radius:2px;background:#18bc9c"></div>
<svg class="abs" style="left:315.2px;top:242.25px" width="10.6" height="10" viewBox="0 0 10.5 10" preserveAspectRatio="none"><path d="M0 10L0.7 7.1L7.6 0.2L10.4 3L3.5 9.9Z" fill="#fff"/></svg>
<div class="abs" style="left:335px;top:236.5px;width:21px;height:20px;border-radius:2px;background:#e74c3c"></div>
<svg class="abs" style="left:340.3px;top:242.25px" width="9.6" height="10" viewBox="0 0 9.6 10" preserveAspectRatio="none"><g fill="#fff"><rect x="0" y="1.5" width="9.6" height="1.5"/><path d="M2.8 1.8V0.2H6.8V1.8H5.8V1.1H3.8V1.8Z"/><path d="M0.9 3.2H8.7L8.3 10H1.3Z"/></g><g fill="#e74c3c"><rect x="3" y="4.3" width="0.9" height="4.6"/><rect x="5.7" y="4.3" width="0.9" height="4.6"/></g></svg>
<div class="cell" style="left:376.6px;top:228.0px;width:157.39999999999998px;height:37.5px;line-height:36.5px;overflow:visible;">UB2512141039103630</div>
<div class="cell" style="left:550px;top:228.0px;width:64px;height:37.5px;line-height:36.5px;overflow:visible;">112233</div>
<div class="cell" style="left:630px;top:228.0px;width:64.5px;height:37.5px;line-height:36.5px;overflow:visible;">Lv 1</div>
<div class="cell" style="left:710.5px;top:228.0px;width:183.89999999999998px;height:37.5px;line-height:36.5px;overflow:visible;text-align:left;">M5Stack Cardputer Kit with ...</div>
<div class="cell" style="left:910.4px;top:228.0px;width:63.10000000000002px;height:37.5px;line-height:36.5px;overflow:visible;">1</div>
<div class="cell" style="left:989.5px;top:228.0px;width:63.5px;height:37.5px;line-height:36.5px;overflow:visible;">990</div>
<div class="cell" style="left:1069px;top:228.0px;width:150.5px;height:37.5px;line-height:36.5px;overflow:visible;">5.84</div>
<div class="cell" style="left:1332px;top:228.0px;width:143.4000000000001px;height:37.5px;line-height:36.5px;overflow:visible;">2025-12-14 10:39:10</div>
<div class="cell" style="left:1491.4px;top:228.0px;width:143.0999999999999px;height:37.5px;line-height:36.5px;overflow:visible;">2025-12-14 10:39:11</div>
<div class="cell" style="left:1650.5px;top:228.0px;width:143.0999999999999px;height:37.5px;line-height:36.5px;overflow:visible;">2025-12-14 10:39:11</div>
<div class="cell" style="left:1888.6px;top:228.0px;width:49.40000000000009px;height:37.5px;line-height:36.5px;overflow:visible;">-</div>
<div class="cell" style="left:1227.5px;top:228.0px;width:96.5px;height:37.5px;line-height:36.5px;color:#18bc9c"><span style="display:inline-block;width:11px;height:11px;border-radius:50%;background:#18bc9c;vertical-align:-1px;margin-right:4px"></span>交易完成</div>
<div class="abs" style="left:1820px;top:239.75px;width:41px;height:16px;border-radius:3px;background:#f39c12;color:#fff;font-size:10px;font-weight:bold;line-height:16px;text-align:center">已发放</div>
<div class="abs" style="left:272px;top:275.25px;width:13px;height:13px;border:1px solid #767676;border-radius:2px;background:#fff"></div>
<div class="abs" style="left:310px;top:274.0px;width:21px;height:20px;border-radius:2px;background:#18bc9c"></div>
<svg class="abs" style="left:315.2px;top:279.75px" width="10.6" height="10" viewBox="0 0 10.5 10" preserveAspectRatio="none"><path d="M0 10L0.7 7.1L7.6 0.2L10.4 3L3.5 9.9Z" fill="#fff"/></svg>
<div class="abs" style="left:335px;top:274.0px;width:21px;height:20px;border-radius:2px;background:#e74c3c"></div>
<svg class="abs" style="left:340.3px;top:279.75px" width="9.6" height="10" viewBox="0 0 9.6 10" preserveAspectRatio="none"><g fill="#fff"><rect x="0" y="1.5" width="9.6" height="1.5"/><path d="M2.8 1.8V0.2H6.8V1.8H5.8V1.1H3.8V1.8Z"/><path d="M0.9 3.2H8.7L8.3 10H1.3Z"/></g><g fill="#e74c3c"><rect x="3" y="4.3" width="0.9" height="4.6"/><rect x="5.7" y="4.3" width="0.9" height="4.6"/></g></svg>
<div class="cell" style="left:376.6px;top:265.5px;width:157.39999999999998px;height:37.5px;line-height:36.5px;overflow:visible;">UB2512141034346038</div>
<div class="cell" style="left:550px;top:265.5px;width:64px;height:37.5px;line-height:36.5px;overflow:visible;">456456</div>
<div class="cell" style="left:630px;top:265.5px;width:64.5px;height:37.5px;line-height:36.5px;overflow:visible;">Lv 1</div>
<div class="cell" style="left:710.5px;top:265.5px;width:183.89999999999998px;height:37.5px;line-height:36.5px;overflow:visible;text-align:left;">PC MINI DELL OPTIPLEX 7...</div>
<div class="cell" style="left:910.4px;top:265.5px;width:63.10000000000002px;height:37.5px;line-height:36.5px;overflow:visible;">1</div>
<div class="cell" style="left:989.5px;top:265.5px;width:63.5px;height:37.5px;line-height:36.5px;overflow:visible;">1337.37</div>
<div class="cell" style="left:1069px;top:265.5px;width:150.5px;height:37.5px;line-height:36.5px;overflow:visible;">133.73</div>
<div class="cell" style="left:1332px;top:265.5px;width:143.4000000000001px;height:37.5px;line-height:36.5px;overflow:visible;">2025-12-14 10:34:34</div>
<div class="cell" style="left:1491.4px;top:265.5px;width:143.0999999999999px;height:37.5px;line-height:36.5px;overflow:visible;">无</div>
<div class="cell" style="left:1650.5px;top:265.5px;width:143.0999999999999px;height:37.5px;line-height:36.5px;overflow:visible;">2026-02-21 21:14:34</div>
<div class="cell" style="left:1888.6px;top:265.5px;width:49.40000000000009px;height:37.5px;line-height:36.5px;overflow:visible;">-</div>
<div class="cell" style="left:1227.5px;top:265.5px;width:96.5px;height:37.5px;line-height:36.5px;color:#333"><span style="display:inline-block;width:11px;height:11px;border-radius:50%;background:#2c3e50;vertical-align:-1px;margin-right:4px"></span>待付款</div>
<div class="abs" style="left:1820px;top:277.25px;width:41px;height:16px;border-radius:3px;background:#18bc9c;color:#fff;font-size:10px;font-weight:bold;line-height:16px;text-align:center">未发放</div>
<div class="abs" style="left:272px;top:312.75px;width:13px;height:13px;border:1px solid #767676;border-radius:2px;background:#fff"></div>
<div class="abs" style="left:310px;top:311.5px;width:21px;height:20px;border-radius:2px;background:#18bc9c"></div>
<svg class="abs" style="left:315.2px;top:317.25px" width="10.6" height="10" viewBox="0 0 10.5 10" preserveAspectRatio="none"><path d="M0 10L0.7 7.1L7.6 0.2L10.4 3L3.5 9.9Z" fill="#fff"/></svg>
<div class="abs" style="left:335px;top:311.5px;width:21px;height:20px;border-radius:2px;background:#e74c3c"></div>
<svg class="abs" style="left:340.3px;top:317.25px" width="9.6" height="10" viewBox="0 0 9.6 10" preserveAspectRatio="none"><g fill="#fff"><rect x="0" y="1.5" width="9.6" height="1.5"/><path d="M2.8 1.8V0.2H6.8V1.8H5.8V1.1H3.8V1.8Z"/><path d="M0.9 3.2H8.7L8.3 10H1.3Z"/></g><g fill="#e74c3c"><rect x="3" y="4.3" width="0.9" height="4.6"/><rect x="5.7" y="4.3" width="0.9" height="4.6"/></g></svg>
<div class="cell" style="left:376.6px;top:303.0px;width:157.39999999999998px;height:37.5px;line-height:36.5px;overflow:visible;">UB2512141033575713</div>
<div class="cell" style="left:550px;top:303.0px;width:64px;height:37.5px;line-height:36.5px;overflow:visible;">456456</div>
<div class="cell" style="left:630px;top:303.0px;width:64.5px;height:37.5px;line-height:36.5px;overflow:visible;">Lv 1</div>
<div class="cell" style="left:710.5px;top:303.0px;width:183.89999999999998px;height:37.5px;line-height:36.5px;overflow:visible;text-align:left;">ZERO GRAVITY 1/100 MOO...</div>
<div class="cell" style="left:910.4px;top:303.0px;width:63.10000000000002px;height:37.5px;line-height:36.5px;overflow:visible;">1</div>
<div class="cell" style="left:989.5px;top:303.0px;width:63.5px;height:37.5px;line-height:36.5px;overflow:visible;">1200</div>
<div class="cell" style="left:1069px;top:303.0px;width:150.5px;height:37.5px;line-height:36.5px;overflow:visible;">7.08</div>
<div class="cell" style="left:1332px;top:303.0px;width:143.4000000000001px;height:37.5px;line-height:36.5px;overflow:visible;">2025-12-14 10:33:57</div>
<div class="cell" style="left:1491.4px;top:303.0px;width:143.0999999999999px;height:37.5px;line-height:36.5px;overflow:visible;">2025-12-14 10:34:18</div>
<div class="cell" style="left:1650.5px;top:303.0px;width:143.0999999999999px;height:37.5px;line-height:36.5px;overflow:visible;">2025-12-14 10:34:18</div>
<div class="cell" style="left:1888.6px;top:303.0px;width:49.40000000000009px;height:37.5px;line-height:36.5px;overflow:visible;">-</div>
<div class="cell" style="left:1227.5px;top:303.0px;width:96.5px;height:37.5px;line-height:36.5px;color:#18bc9c"><span style="display:inline-block;width:11px;height:11px;border-radius:50%;background:#18bc9c;vertical-align:-1px;margin-right:4px"></span>交易完成</div>
<div class="abs" style="left:1820px;top:314.75px;width:41px;height:16px;border-radius:3px;background:#f39c12;color:#fff;font-size:10px;font-weight:bold;line-height:16px;text-align:center">已发放</div>
<div class="abs" style="left:272px;top:350.25px;width:13px;height:13px;border:1px solid #767676;border-radius:2px;background:#fff"></div>
<div class="abs" style="left:310px;top:349.0px;width:21px;height:20px;border-radius:2px;background:#18bc9c"></div>
<svg class="abs" style="left:315.2px;top:354.75px" width="10.6" height="10" viewBox="0 0 10.5 10" preserveAspectRatio="none"><path d="M0 10L0.7 7.1L7.6 0.2L10.4 3L3.5 9.9Z" fill="#fff"/></svg>
<div class="abs" style="left:335px;top:349.0px;width:21px;height:20px;border-radius:2px;background:#e74c3c"></div>
<svg class="abs" style="left:340.3px;top:354.75px" width="9.6" height="10" viewBox="0 0 9.6 10" preserveAspectRatio="none"><g fill="#fff"><rect x="0" y="1.5" width="9.6" height="1.5"/><path d="M2.8 1.8V0.2H6.8V1.8H5.8V1.1H3.8V1.8Z"/><path d="M0.9 3.2H8.7L8.3 10H1.3Z"/></g><g fill="#e74c3c"><rect x="3" y="4.3" width="0.9" height="4.6"/><rect x="5.7" y="4.3" width="0.9" height="4.6"/></g></svg>
<div class="cell" style="left:376.6px;top:340.5px;width:157.39999999999998px;height:37.5px;line-height:36.5px;overflow:visible;">UB2512141028584500</div>
<div class="cell" style="left:550px;top:340.5px;width:64px;height:37.5px;line-height:36.5px;overflow:visible;">456456</div>
<div class="cell" style="left:630px;top:340.5px;width:64.5px;height:37.5px;line-height:36.5px;overflow:visible;">Lv 1</div>
<div class="cell" style="left:710.5px;top:340.5px;width:183.89999999999998px;height:37.5px;line-height:36.5px;overflow:visible;text-align:left;">Raspberry Pi 4 Model B Ram...</div>
<div class="cell" style="left:910.4px;top:340.5px;width:63.10000000000002px;height:37.5px;line-height:36.5px;overflow:visible;">1</div>
<div class="cell" style="left:989.5px;top:340.5px;width:63.5px;height:37.5px;line-height:36.5px;overflow:visible;">1190</div>
<div class="cell" style="left:1069px;top:340.5px;width:150.5px;height:37.5px;line-height:36.5px;overflow:visible;">7.02</div>
<div class="cell" style="left:1332px;top:340.5px;width:143.4000000000001px;height:37.5px;line-height:36.5px;overflow:visible;">2025-12-14 10:28:58</div>
<div class="cell" style="left:1491.4px;top:340.5px;width:143.0999999999999px;height:37.5px;line-height:36.5px;overflow:visible;">2025-12-14 10:28:59</div>
<div class="cell" style="left:1650.5px;top:340.5px;width:143.0999999999999px;height:37.5px;line-height:36.5px;overflow:visible;">2025-12-14 10:28:59</div>
<div class="cell" style="left:1888.6px;top:340.5px;width:49.40000000000009px;height:37.5px;line-height:36.5px;overflow:visible;">-</div>
<div class="cell" style="left:1227.5px;top:340.5px;width:96.5px;height:37.5px;line-height:36.5px;color:#18bc9c"><span style="display:inline-block;width:11px;height:11px;border-radius:50%;background:#18bc9c;vertical-align:-1px;margin-right:4px"></span>交易完成</div>
<div class="abs" style="left:1820px;top:352.25px;width:41px;height:16px;border-radius:3px;background:#f39c12;color:#fff;font-size:10px;font-weight:bold;line-height:16px;text-align:center">已发放</div>
<div class="abs" style="left:272px;top:387.75px;width:13px;height:13px;border:1px solid #767676;border-radius:2px;background:#fff"></div>
<div class="abs" style="left:310px;top:386.5px;width:21px;height:20px;border-radius:2px;background:#18bc9c"></div>
<svg class="abs" style="left:315.2px;top:392.25px" width="10.6" height="10" viewBox="0 0 10.5 10" preserveAspectRatio="none"><path d="M0 10L0.7 7.1L7.6 0.2L10.4 3L3.5 9.9Z" fill="#fff"/></svg>
<div class="abs" style="left:335px;top:386.5px;width:21px;height:20px;border-radius:2px;background:#e74c3c"></div>
<svg class="abs" style="left:340.3px;top:392.25px" width="9.6" height="10" viewBox="0 0 9.6 10" preserveAspectRatio="none"><g fill="#fff"><rect x="0" y="1.5" width="9.6" height="1.5"/><path d="M2.8 1.8V0.2H6.8V1.8H5.8V1.1H3.8V1.8Z"/><path d="M0.9 3.2H8.7L8.3 10H1.3Z"/></g><g fill="#e74c3c"><rect x="3" y="4.3" width="0.9" height="4.6"/><rect x="5.7" y="4.3" width="0.9" height="4.6"/></g></svg>
<div class="cell" style="left:376.6px;top:378.0px;width:157.39999999999998px;height:37.5px;line-height:36.5px;overflow:visible;">UB2512141028572010</div>
<div class="cell" style="left:550px;top:378.0px;width:64px;height:37.5px;line-height:36.5px;overflow:visible;">456456</div>
<div class="cell" style="left:630px;top:378.0px;width:64.5px;height:37.5px;line-height:36.5px;overflow:visible;">Lv 1</div>
<div class="cell" style="left:710.5px;top:378.0px;width:183.89999999999998px;height:37.5px;line-height:36.5px;overflow:visible;text-align:left;">Raspberry Pi 4 Model B Ram...</div>
<div class="cell" style="left:910.4px;top:378.0px;width:63.10000000000002px;height:37.5px;line-height:36.5px;overflow:visible;">1</div>
<div class="cell" style="left:989.5px;top:378.0px;width:63.5px;height:37.5px;line-height:36.5px;overflow:visible;">1190</div>
<div class="cell" style="left:1069px;top:378.0px;width:150.5px;height:37.5px;line-height:36.5px;overflow:visible;">7.02</div>
<div class="cell" style="left:1332px;top:378.0px;width:143.4000000000001px;height:37.5px;line-height:36.5px;overflow:visible;">2025-12-14 10:28:57</div>
<div class="cell" style="left:1491.4px;top:378.0px;width:143.0999999999999px;height:37.5px;line-height:36.5px;overflow:visible;">2025-12-14 10:28:57</div>
<div class="cell" style="left:1650.5px;top:378.0px;width:143.0999999999999px;height:37.5px;line-height:36.5px;overflow:visible;">2025-12-14 10:28:57</div>
<div class="cell" style="left:1888.6px;top:378.0px;width:49.40000000000009px;height:37.5px;line-height:36.5px;overflow:visible;">-</div>
<div class="cell" style="left:1227.5px;top:378.0px;width:96.5px;height:37.5px;line-height:36.5px;color:#18bc9c"><span style="display:inline-block;width:11px;height:11px;border-radius:50%;background:#18bc9c;vertical-align:-1px;margin-right:4px"></span>交易完成</div>
<div class="abs" style="left:1820px;top:389.75px;width:41px;height:16px;border-radius:3px;background:#f39c12;color:#fff;font-size:10px;font-weight:bold;line-height:16px;text-align:center">已发放</div>
<div class="abs" style="left:272px;top:425.25px;width:13px;height:13px;border:1px solid #767676;border-radius:2px;background:#fff"></div>
<div class="abs" style="left:310px;top:424.0px;width:21px;height:20px;border-radius:2px;background:#18bc9c"></div>
<svg class="abs" style="left:315.2px;top:429.75px" width="10.6" height="10" viewBox="0 0 10.5 10" preserveAspectRatio="none"><path d="M0 10L0.7 7.1L7.6 0.2L10.4 3L3.5 9.9Z" fill="#fff"/></svg>
<div class="abs" style="left:335px;top:424.0px;width:21px;height:20px;border-radius:2px;background:#e74c3c"></div>
<svg class="abs" style="left:340.3px;top:429.75px" width="9.6" height="10" viewBox="0 0 9.6 10" preserveAspectRatio="none"><g fill="#fff"><rect x="0" y="1.5" width="9.6" height="1.5"/><path d="M2.8 1.8V0.2H6.8V1.8H5.8V1.1H3.8V1.8Z"/><path d="M0.9 3.2H8.7L8.3 10H1.3Z"/></g><g fill="#e74c3c"><rect x="3" y="4.3" width="0.9" height="4.6"/><rect x="5.7" y="4.3" width="0.9" height="4.6"/></g></svg>
<div class="cell" style="left:376.6px;top:415.5px;width:157.39999999999998px;height:37.5px;line-height:36.5px;overflow:visible;">UB2512141028288362</div>
<div class="cell" style="left:550px;top:415.5px;width:64px;height:37.5px;line-height:36.5px;overflow:visible;">456456</div>
<div class="cell" style="left:630px;top:415.5px;width:64.5px;height:37.5px;line-height:36.5px;overflow:visible;">Lv 1</div>
<div class="cell" style="left:710.5px;top:415.5px;width:183.89999999999998px;height:37.5px;line-height:36.5px;overflow:visible;text-align:left;">PC MINI LENOVO THINKCE...</div>
<div class="cell" style="left:910.4px;top:415.5px;width:63.10000000000002px;height:37.5px;line-height:36.5px;overflow:visible;">1</div>
<div class="cell" style="left:989.5px;top:415.5px;width:63.5px;height:37.5px;line-height:36.5px;overflow:visible;">1105.69</div>
<div class="cell" style="left:1069px;top:415.5px;width:150.5px;height:37.5px;line-height:36.5px;overflow:visible;">110.56</div>
<div class="cell" style="left:1332px;top:415.5px;width:143.4000000000001px;height:37.5px;line-height:36.5px;overflow:visible;">2025-12-14 10:28:28</div>
<div class="cell" style="left:1491.4px;top:415.5px;width:143.0999999999999px;height:37.5px;line-height:36.5px;overflow:visible;">2025-12-14 10:28:50</div>
<div class="cell" style="left:1650.5px;top:415.5px;width:143.0999999999999px;height:37.5px;line-height:36.5px;overflow:visible;">2025-12-14 10:28:50</div>
<div class="cell" style="left:1888.6px;top:415.5px;width:49.40000000000009px;height:37.5px;line-height:36.5px;overflow:visible;">-</div>
<div class="cell" style="left:1227.5px;top:415.5px;width:96.5px;height:37.5px;line-height:36.5px;color:#18bc9c"><span style="display:inline-block;width:11px;height:11px;border-radius:50%;background:#18bc9c;vertical-align:-1px;margin-right:4px"></span>交易完成</div>
<div class="abs" style="left:1820px;top:427.25px;width:41px;height:16px;border-radius:3px;background:#f39c12;color:#fff;font-size:10px;font-weight:bold;line-height:16px;text-align:center">已发放</div>
<div class="abs" style="left:272px;top:462.75px;width:13px;height:13px;border:1px solid #767676;border-radius:2px;background:#fff"></div>
<div class="abs" style="left:310px;top:461.5px;width:21px;height:20px;border-radius:2px;background:#18bc9c"></div>
<svg class="abs" style="left:315.2px;top:467.25px" width="10.6" height="10" viewBox="0 0 10.5 10" preserveAspectRatio="none"><path d="M0 10L0.7 7.1L7.6 0.2L10.4 3L3.5 9.9Z" fill="#fff"/></svg>
<div class="abs" style="left:335px;top:461.5px;width:21px;height:20px;border-radius:2px;background:#e74c3c"></div>
<svg class="abs" style="left:340.3px;top:467.25px" width="9.6" height="10" viewBox="0 0 9.6 10" preserveAspectRatio="none"><g fill="#fff"><rect x="0" y="1.5" width="9.6" height="1.5"/><path d="M2.8 1.8V0.2H6.8V1.8H5.8V1.1H3.8V1.8Z"/><path d="M0.9 3.2H8.7L8.3 10H1.3Z"/></g><g fill="#e74c3c"><rect x="3" y="4.3" width="0.9" height="4.6"/><rect x="5.7" y="4.3" width="0.9" height="4.6"/></g></svg>
<div class="cell" style="left:376.6px;top:453.0px;width:157.39999999999998px;height:37.5px;line-height:36.5px;overflow:visible;">UB2512141028269742</div>
<div class="cell" style="left:550px;top:453.0px;width:64px;height:37.5px;line-height:36.5px;overflow:visible;">456456</div>
<div class="cell" style="left:630px;top:453.0px;width:64.5px;height:37.5px;line-height:36.5px;overflow:visible;">Lv 1</div>
<div class="cell" style="left:710.5px;top:453.0px;width:183.89999999999998px;height:37.5px;line-height:36.5px;overflow:visible;text-align:left;">PC Rakitan Core i5/CPU Cor...</div>
<div class="cell" style="left:910.4px;top:453.0px;width:63.10000000000002px;height:37.5px;line-height:36.5px;overflow:visible;">1</div>
<div class="cell" style="left:989.5px;top:453.0px;width:63.5px;height:37.5px;line-height:36.5px;overflow:visible;">965</div>
<div class="cell" style="left:1069px;top:453.0px;width:150.5px;height:37.5px;line-height:36.5px;overflow:visible;">5.6899999999999995</div>
<div class="cell" style="left:1332px;top:453.0px;width:143.4000000000001px;height:37.5px;line-height:36.5px;overflow:visible;">2025-12-14 10:28:26</div>
<div class="cell" style="left:1491.4px;top:453.0px;width:143.0999999999999px;height:37.5px;line-height:36.5px;overflow:visible;">2025-12-14 10:28:27</div>
<div class="cell" style="left:1650.5px;top:453.0px;width:143.0999999999999px;height:37.5px;line-height:36.5px;overflow:visible;">2025-12-14 10:28:27</div>
<div class="cell" style="left:1888.6px;top:453.0px;width:49.40000000000009px;height:37.5px;line-height:36.5px;overflow:visible;">-</div>
<div class="cell" style="left:1227.5px;top:453.0px;width:96.5px;height:37.5px;line-height:36.5px;color:#18bc9c"><span style="display:inline-block;width:11px;height:11px;border-radius:50%;background:#18bc9c;vertical-align:-1px;margin-right:4px"></span>交易完成</div>
<div class="abs" style="left:1820px;top:464.75px;width:41px;height:16px;border-radius:3px;background:#f39c12;color:#fff;font-size:10px;font-weight:bold;line-height:16px;text-align:center">已发放</div>
<div class="abs" style="left:272px;top:500.25px;width:13px;height:13px;border:1px solid #767676;border-radius:2px;background:#fff"></div>
<div class="abs" style="left:310px;top:499.0px;width:21px;height:20px;border-radius:2px;background:#18bc9c"></div>
<svg class="abs" style="left:315.2px;top:504.75px" width="10.6" height="10" viewBox="0 0 10.5 10" preserveAspectRatio="none"><path d="M0 10L0.7 7.1L7.6 0.2L10.4 3L3.5 9.9Z" fill="#fff"/></svg>
<div class="abs" style="left:335px;top:499.0px;width:21px;height:20px;border-radius:2px;background:#e74c3c"></div>
<svg class="abs" style="left:340.3px;top:504.75px" width="9.6" height="10" viewBox="0 0 9.6 10" preserveAspectRatio="none"><g fill="#fff"><rect x="0" y="1.5" width="9.6" height="1.5"/><path d="M2.8 1.8V0.2H6.8V1.8H5.8V1.1H3.8V1.8Z"/><path d="M0.9 3.2H8.7L8.3 10H1.3Z"/></g><g fill="#e74c3c"><rect x="3" y="4.3" width="0.9" height="4.6"/><rect x="5.7" y="4.3" width="0.9" height="4.6"/></g></svg>
<div class="cell" style="left:376.6px;top:490.5px;width:157.39999999999998px;height:37.5px;line-height:36.5px;overflow:visible;">UB2512141026292201</div>
<div class="cell" style="left:550px;top:490.5px;width:64px;height:37.5px;line-height:36.5px;overflow:visible;">789789</div>
<div class="cell" style="left:630px;top:490.5px;width:64.5px;height:37.5px;line-height:36.5px;overflow:visible;">Lv 1</div>
<div class="cell" style="left:710.5px;top:490.5px;width:183.89999999999998px;height:37.5px;line-height:36.5px;overflow:visible;">mini pc dell 3050 i3 gen7</div>
<div class="cell" style="left:910.4px;top:490.5px;width:63.10000000000002px;height:37.5px;line-height:36.5px;overflow:visible;">1</div>
<div class="cell" style="left:989.5px;top:490.5px;width:63.5px;height:37.5px;line-height:36.5px;overflow:visible;">1200</div>
<div class="cell" style="left:1069px;top:490.5px;width:150.5px;height:37.5px;line-height:36.5px;overflow:visible;">7.08</div>
<div class="cell" style="left:1332px;top:490.5px;width:143.4000000000001px;height:37.5px;line-height:36.5px;overflow:visible;">2025-12-14 10:26:29</div>
<div class="cell" style="left:1491.4px;top:490.5px;width:143.0999999999999px;height:37.5px;line-height:36.5px;overflow:visible;">2025-12-14 10:26:30</div>
<div class="cell" style="left:1650.5px;top:490.5px;width:143.0999999999999px;height:37.5px;line-height:36.5px;overflow:visible;">2025-12-14 10:26:30</div>
<div class="cell" style="left:1888.6px;top:490.5px;width:49.40000000000009px;height:37.5px;line-height:36.5px;overflow:visible;">-</div>
<div class="cell" style="left:1227.5px;top:490.5px;width:96.5px;height:37.5px;line-height:36.5px;color:#18bc9c"><span style="display:inline-block;width:11px;height:11px;border-radius:50%;background:#18bc9c;vertical-align:-1px;margin-right:4px"></span>交易完成</div>
<div class="abs" style="left:1820px;top:502.25px;width:41px;height:16px;border-radius:3px;background:#f39c12;color:#fff;font-size:10px;font-weight:bold;line-height:16px;text-align:center">已发放</div>
<div class="abs" style="left:272px;top:537.75px;width:13px;height:13px;border:1px solid #767676;border-radius:2px;background:#fff"></div>
<div class="abs" style="left:310px;top:536.5px;width:21px;height:20px;border-radius:2px;background:#18bc9c"></div>
<svg class="abs" style="left:315.2px;top:542.25px" width="10.6" height="10" viewBox="0 0 10.5 10" preserveAspectRatio="none"><path d="M0 10L0.7 7.1L7.6 0.2L10.4 3L3.5 9.9Z" fill="#fff"/></svg>
<div class="abs" style="left:335px;top:536.5px;width:21px;height:20px;border-radius:2px;background:#e74c3c"></div>
<svg class="abs" style="left:340.3px;top:542.25px" width="9.6" height="10" viewBox="0 0 9.6 10" preserveAspectRatio="none"><g fill="#fff"><rect x="0" y="1.5" width="9.6" height="1.5"/><path d="M2.8 1.8V0.2H6.8V1.8H5.8V1.1H3.8V1.8Z"/><path d="M0.9 3.2H8.7L8.3 10H1.3Z"/></g><g fill="#e74c3c"><rect x="3" y="4.3" width="0.9" height="4.6"/><rect x="5.7" y="4.3" width="0.9" height="4.6"/></g></svg>
<div class="cell" style="left:376.6px;top:528.0px;width:157.39999999999998px;height:37.5px;line-height:36.5px;overflow:visible;">UB2512141026285708</div>
<div class="cell" style="left:550px;top:528.0px;width:64px;height:37.5px;line-height:36.5px;overflow:visible;">789789</div>
<div class="cell" style="left:630px;top:528.0px;width:64.5px;height:37.5px;line-height:36.5px;overflow:visible;">Lv 1</div>
<div class="cell" style="left:710.5px;top:528.0px;width:183.89999999999998px;height:37.5px;line-height:36.5px;overflow:visible;text-align:left;">CPU PC RAKITAN CORE I5 ...</div>
<div class="cell" style="left:910.4px;top:528.0px;width:63.10000000000002px;height:37.5px;line-height:36.5px;overflow:visible;">1</div>
<div class="cell" style="left:989.5px;top:528.0px;width:63.5px;height:37.5px;line-height:36.5px;overflow:visible;">1200</div>
<div class="cell" style="left:1069px;top:528.0px;width:150.5px;height:37.5px;line-height:36.5px;overflow:visible;">7.08</div>
<div class="cell" style="left:1332px;top:528.0px;width:143.4000000000001px;height:37.5px;line-height:36.5px;overflow:visible;">2025-12-14 10:26:28</div>
<div class="cell" style="left:1491.4px;top:528.0px;width:143.0999999999999px;height:37.5px;line-height:36.5px;overflow:visible;">2025-12-14 10:26:28</div>
<div class="cell" style="left:1650.5px;top:528.0px;width:143.0999999999999px;height:37.5px;line-height:36.5px;overflow:visible;">2025-12-14 10:26:28</div>
<div class="cell" style="left:1888.6px;top:528.0px;width:49.40000000000009px;height:37.5px;line-height:36.5px;overflow:visible;">-</div>
<div class="cell" style="left:1227.5px;top:528.0px;width:96.5px;height:37.5px;line-height:36.5px;color:#18bc9c"><span style="display:inline-block;width:11px;height:11px;border-radius:50%;background:#18bc9c;vertical-align:-1px;margin-right:4px"></span>交易完成</div>
<div class="abs" style="left:1820px;top:539.75px;width:41px;height:16px;border-radius:3px;background:#f39c12;color:#fff;font-size:10px;font-weight:bold;line-height:16px;text-align:center">已发放</div>
<div class="abs" style="left:272px;top:575.25px;width:13px;height:13px;border:1px solid #767676;border-radius:2px;background:#fff"></div>
<div class="abs" style="left:310px;top:574.0px;width:21px;height:20px;border-radius:2px;background:#18bc9c"></div>
<svg class="abs" style="left:315.2px;top:579.75px" width="10.6" height="10" viewBox="0 0 10.5 10" preserveAspectRatio="none"><path d="M0 10L0.7 7.1L7.6 0.2L10.4 3L3.5 9.9Z" fill="#fff"/></svg>
<div class="abs" style="left:335px;top:574.0px;width:21px;height:20px;border-radius:2px;background:#e74c3c"></div>
<svg class="abs" style="left:340.3px;top:579.75px" width="9.6" height="10" viewBox="0 0 9.6 10" preserveAspectRatio="none"><g fill="#fff"><rect x="0" y="1.5" width="9.6" height="1.5"/><path d="M2.8 1.8V0.2H6.8V1.8H5.8V1.1H3.8V1.8Z"/><path d="M0.9 3.2H8.7L8.3 10H1.3Z"/></g><g fill="#e74c3c"><rect x="3" y="4.3" width="0.9" height="4.6"/><rect x="5.7" y="4.3" width="0.9" height="4.6"/></g></svg>
<div class="cell" style="left:376.6px;top:565.5px;width:157.39999999999998px;height:37.5px;line-height:36.5px;overflow:visible;">UB2512141026272186</div>
<div class="cell" style="left:550px;top:565.5px;width:64px;height:37.5px;line-height:36.5px;overflow:visible;">789789</div>
<div class="cell" style="left:630px;top:565.5px;width:64.5px;height:37.5px;line-height:36.5px;overflow:visible;">Lv 1</div>
<div class="cell" style="left:710.5px;top:565.5px;width:183.89999999999998px;height:37.5px;line-height:36.5px;overflow:visible;text-align:left;">PC MINI DELL OPTIPLEX 7...</div>
<div class="cell" style="left:910.4px;top:565.5px;width:63.10000000000002px;height:37.5px;line-height:36.5px;overflow:visible;">1</div>
<div class="cell" style="left:989.5px;top:565.5px;width:63.5px;height:37.5px;line-height:36.5px;overflow:visible;">1200</div>
<div class="cell" style="left:1069px;top:565.5px;width:150.5px;height:37.5px;line-height:36.5px;overflow:visible;">7.08</div>
<div class="cell" style="left:1332px;top:565.5px;width:143.4000000000001px;height:37.5px;line-height:36.5px;overflow:visible;">2025-12-14 10:26:27</div>
<div class="cell" style="left:1491.4px;top:565.5px;width:143.0999999999999px;height:37.5px;line-height:36.5px;overflow:visible;">2025-12-14 10:26:27</div>
<div class="cell" style="left:1650.5px;top:565.5px;width:143.0999999999999px;height:37.5px;line-height:36.5px;overflow:visible;">2025-12-14 10:26:27</div>
<div class="cell" style="left:1888.6px;top:565.5px;width:49.40000000000009px;height:37.5px;line-height:36.5px;overflow:visible;">-</div>
<div class="cell" style="left:1227.5px;top:565.5px;width:96.5px;height:37.5px;line-height:36.5px;color:#18bc9c"><span style="display:inline-block;width:11px;height:11px;border-radius:50%;background:#18bc9c;vertical-align:-1px;margin-right:4px"></span>交易完成</div>
<div class="abs" style="left:1820px;top:577.25px;width:41px;height:16px;border-radius:3px;background:#f39c12;color:#fff;font-size:10px;font-weight:bold;line-height:16px;text-align:center">已发放</div>
<div class="abs" style="left:272px;top:612.75px;width:13px;height:13px;border:1px solid #767676;border-radius:2px;background:#fff"></div>
<div class="abs" style="left:310px;top:611.5px;width:21px;height:20px;border-radius:2px;background:#18bc9c"></div>
<svg class="abs" style="left:315.2px;top:617.25px" width="10.6" height="10" viewBox="0 0 10.5 10" preserveAspectRatio="none"><path d="M0 10L0.7 7.1L7.6 0.2L10.4 3L3.5 9.9Z" fill="#fff"/></svg>
<div class="abs" style="left:335px;top:611.5px;width:21px;height:20px;border-radius:2px;background:#e74c3c"></div>
<svg class="abs" style="left:340.3px;top:617.25px" width="9.6" height="10" viewBox="0 0 9.6 10" preserveAspectRatio="none"><g fill="#fff"><rect x="0" y="1.5" width="9.6" height="1.5"/><path d="M2.8 1.8V0.2H6.8V1.8H5.8V1.1H3.8V1.8Z"/><path d="M0.9 3.2H8.7L8.3 10H1.3Z"/></g><g fill="#e74c3c"><rect x="3" y="4.3" width="0.9" height="4.6"/><rect x="5.7" y="4.3" width="0.9" height="4.6"/></g></svg>
<div class="cell" style="left:376.6px;top:603.0px;width:157.39999999999998px;height:37.5px;line-height:36.5px;overflow:visible;">UB2512141026267753</div>
<div class="cell" style="left:550px;top:603.0px;width:64px;height:37.5px;line-height:36.5px;overflow:visible;">789789</div>
<div class="cell" style="left:630px;top:603.0px;width:64.5px;height:37.5px;line-height:36.5px;overflow:visible;">Lv 1</div>
<div class="cell" style="left:710.5px;top:603.0px;width:183.89999999999998px;height:37.5px;line-height:36.5px;overflow:visible;text-align:left;">CPU PC RAKITAN CORE I5 ...</div>
<div class="cell" style="left:910.4px;top:603.0px;width:63.10000000000002px;height:37.5px;line-height:36.5px;overflow:visible;">1</div>
<div class="cell" style="left:989.5px;top:603.0px;width:63.5px;height:37.5px;line-height:36.5px;overflow:visible;">1200</div>
<div class="cell" style="left:1069px;top:603.0px;width:150.5px;height:37.5px;line-height:36.5px;overflow:visible;">7.08</div>
<div class="cell" style="left:1332px;top:603.0px;width:143.4000000000001px;height:37.5px;line-height:36.5px;overflow:visible;">2025-12-14 10:26:26</div>
<div class="cell" style="left:1491.4px;top:603.0px;width:143.0999999999999px;height:37.5px;line-height:36.5px;overflow:visible;">2025-12-14 10:26:26</div>
<div class="cell" style="left:1650.5px;top:603.0px;width:143.0999999999999px;height:37.5px;line-height:36.5px;overflow:visible;">2025-12-14 10:26:26</div>
<div class="cell" style="left:1888.6px;top:603.0px;width:49.40000000000009px;height:37.5px;line-height:36.5px;overflow:visible;">-</div>
<div class="cell" style="left:1227.5px;top:603.0px;width:96.5px;height:37.5px;line-height:36.5px;color:#18bc9c"><span style="display:inline-block;width:11px;height:11px;border-radius:50%;background:#18bc9c;vertical-align:-1px;margin-right:4px"></span>交易完成</div>
<div class="abs" style="left:1820px;top:614.75px;width:41px;height:16px;border-radius:3px;background:#f39c12;color:#fff;font-size:10px;font-weight:bold;line-height:16px;text-align:center">已发放</div>
<div class="abs" style="left:272px;top:650.25px;width:13px;height:13px;border:1px solid #767676;border-radius:2px;background:#fff"></div>
<div class="abs" style="left:310px;top:649.0px;width:21px;height:20px;border-radius:2px;background:#18bc9c"></div>
<svg class="abs" style="left:315.2px;top:654.75px" width="10.6" height="10" viewBox="0 0 10.5 10" preserveAspectRatio="none"><path d="M0 10L0.7 7.1L7.6 0.2L10.4 3L3.5 9.9Z" fill="#fff"/></svg>
<div class="abs" style="left:335px;top:649.0px;width:21px;height:20px;border-radius:2px;background:#e74c3c"></div>
<svg class="abs" style="left:340.3px;top:654.75px" width="9.6" height="10" viewBox="0 0 9.6 10" preserveAspectRatio="none"><g fill="#fff"><rect x="0" y="1.5" width="9.6" height="1.5"/><path d="M2.8 1.8V0.2H6.8V1.8H5.8V1.1H3.8V1.8Z"/><path d="M0.9 3.2H8.7L8.3 10H1.3Z"/></g><g fill="#e74c3c"><rect x="3" y="4.3" width="0.9" height="4.6"/><rect x="5.7" y="4.3" width="0.9" height="4.6"/></g></svg>
<div class="cell" style="left:376.6px;top:640.5px;width:157.39999999999998px;height:37.5px;line-height:36.5px;overflow:visible;">UB2512141026246875</div>
<div class="cell" style="left:550px;top:640.5px;width:64px;height:37.5px;line-height:36.5px;overflow:visible;">789789</div>
<div class="cell" style="left:630px;top:640.5px;width:64.5px;height:37.5px;line-height:36.5px;overflow:visible;">Lv 1</div>
<div class="cell" style="left:710.5px;top:640.5px;width:183.89999999999998px;height:37.5px;line-height:36.5px;overflow:visible;text-align:left;">PC Rakitan Core i5 + Monitor...</div>
<div class="cell" style="left:910.4px;top:640.5px;width:63.10000000000002px;height:37.5px;line-height:36.5px;overflow:visible;">1</div>
<div class="cell" style="left:989.5px;top:640.5px;width:63.5px;height:37.5px;line-height:36.5px;overflow:visible;">1199</div>
<div class="cell" style="left:1069px;top:640.5px;width:150.5px;height:37.5px;line-height:36.5px;overflow:visible;">7.07</div>
<div class="cell" style="left:1332px;top:640.5px;width:143.4000000000001px;height:37.5px;line-height:36.5px;overflow:visible;">2025-12-14 10:26:24</div>
<div class="cell" style="left:1491.4px;top:640.5px;width:143.0999999999999px;height:37.5px;line-height:36.5px;overflow:visible;">2025-12-14 10:26:25</div>
<div class="cell" style="left:1650.5px;top:640.5px;width:143.0999999999999px;height:37.5px;line-height:36.5px;overflow:visible;">2025-12-14 10:26:25</div>
<div class="cell" style="left:1888.6px;top:640.5px;width:49.40000000000009px;height:37.5px;line-height:36.5px;overflow:visible;">-</div>
<div class="cell" style="left:1227.5px;top:640.5px;width:96.5px;height:37.5px;line-height:36.5px;color:#18bc9c"><span style="display:inline-block;width:11px;height:11px;border-radius:50%;background:#18bc9c;vertical-align:-1px;margin-right:4px"></span>交易完成</div>
<div class="abs" style="left:1820px;top:652.25px;width:41px;height:16px;border-radius:3px;background:#f39c12;color:#fff;font-size:10px;font-weight:bold;line-height:16px;text-align:center">已发放</div>
<div class="abs" style="left:272px;top:687.75px;width:13px;height:13px;border:1px solid #767676;border-radius:2px;background:#fff"></div>
<div class="abs" style="left:310px;top:686.5px;width:21px;height:20px;border-radius:2px;background:#18bc9c"></div>
<svg class="abs" style="left:315.2px;top:692.25px" width="10.6" height="10" viewBox="0 0 10.5 10" preserveAspectRatio="none"><path d="M0 10L0.7 7.1L7.6 0.2L10.4 3L3.5 9.9Z" fill="#fff"/></svg>
<div class="abs" style="left:335px;top:686.5px;width:21px;height:20px;border-radius:2px;background:#e74c3c"></div>
<svg class="abs" style="left:340.3px;top:692.25px" width="9.6" height="10" viewBox="0 0 9.6 10" preserveAspectRatio="none"><g fill="#fff"><rect x="0" y="1.5" width="9.6" height="1.5"/><path d="M2.8 1.8V0.2H6.8V1.8H5.8V1.1H3.8V1.8Z"/><path d="M0.9 3.2H8.7L8.3 10H1.3Z"/></g><g fill="#e74c3c"><rect x="3" y="4.3" width="0.9" height="4.6"/><rect x="5.7" y="4.3" width="0.9" height="4.6"/></g></svg>
<div class="cell" style="left:376.6px;top:678.0px;width:157.39999999999998px;height:37.5px;line-height:36.5px;overflow:visible;">UB2512141026239232</div>
<div class="cell" style="left:550px;top:678.0px;width:64px;height:37.5px;line-height:36.5px;overflow:visible;">789789</div>
<div class="cell" style="left:630px;top:678.0px;width:64.5px;height:37.5px;line-height:36.5px;overflow:visible;">Lv 1</div>
<div class="cell" style="left:710.5px;top:678.0px;width:183.89999999999998px;height:37.5px;line-height:36.5px;overflow:visible;text-align:left;">CPU PC RAKITAN CORE I5 ...</div>
<div class="cell" style="left:910.4px;top:678.0px;width:63.10000000000002px;height:37.5px;line-height:36.5px;overflow:visible;">1</div>
<div class="cell" style="left:989.5px;top:678.0px;width:63.5px;height:37.5px;line-height:36.5px;overflow:visible;">1200</div>
<div class="cell" style="left:1069px;top:678.0px;width:150.5px;height:37.5px;line-height:36.5px;overflow:visible;">7.08</div>
<div class="cell" style="left:1332px;top:678.0px;width:143.4000000000001px;height:37.5px;line-height:36.5px;overflow:visible;">2025-12-14 10:26:23</div>
<div class="cell" style="left:1491.4px;top:678.0px;width:143.0999999999999px;height:37.5px;line-height:36.5px;overflow:visible;">2025-12-14 10:26:24</div>
<div class="cell" style="left:1650.5px;top:678.0px;width:143.0999999999999px;height:37.5px;line-height:36.5px;overflow:visible;">2025-12-14 10:26:24</div>
<div class="cell" style="left:1888.6px;top:678.0px;width:49.40000000000009px;height:37.5px;line-height:36.5px;overflow:visible;">-</div>
<div class="cell" style="left:1227.5px;top:678.0px;width:96.5px;height:37.5px;line-height:36.5px;color:#18bc9c"><span style="display:inline-block;width:11px;height:11px;border-radius:50%;background:#18bc9c;vertical-align:-1px;margin-right:4px"></span>交易完成</div>
<div class="abs" style="left:1820px;top:689.75px;width:41px;height:16px;border-radius:3px;background:#f39c12;color:#fff;font-size:10px;font-weight:bold;line-height:16px;text-align:center">已发放</div>
<div class="abs" style="left:272px;top:725.25px;width:13px;height:13px;border:1px solid #767676;border-radius:2px;background:#fff"></div>
<div class="abs" style="left:310px;top:724.0px;width:21px;height:20px;border-radius:2px;background:#18bc9c"></div>
<svg class="abs" style="left:315.2px;top:729.75px" width="10.6" height="10" viewBox="0 0 10.5 10" preserveAspectRatio="none"><path d="M0 10L0.7 7.1L7.6 0.2L10.4 3L3.5 9.9Z" fill="#fff"/></svg>
<div class="abs" style="left:335px;top:724.0px;width:21px;height:20px;border-radius:2px;background:#e74c3c"></div>
<svg class="abs" style="left:340.3px;top:729.75px" width="9.6" height="10" viewBox="0 0 9.6 10" preserveAspectRatio="none"><g fill="#fff"><rect x="0" y="1.5" width="9.6" height="1.5"/><path d="M2.8 1.8V0.2H6.8V1.8H5.8V1.1H3.8V1.8Z"/><path d="M0.9 3.2H8.7L8.3 10H1.3Z"/></g><g fill="#e74c3c"><rect x="3" y="4.3" width="0.9" height="4.6"/><rect x="5.7" y="4.3" width="0.9" height="4.6"/></g></svg>
<div class="cell" style="left:376.6px;top:715.5px;width:157.39999999999998px;height:37.5px;line-height:36.5px;overflow:visible;">UB2512141026229040</div>
<div class="cell" style="left:550px;top:715.5px;width:64px;height:37.5px;line-height:36.5px;overflow:visible;">789789</div>
<div class="cell" style="left:630px;top:715.5px;width:64.5px;height:37.5px;line-height:36.5px;overflow:visible;">Lv 1</div>
<div class="cell" style="left:710.5px;top:715.5px;width:183.89999999999998px;height:37.5px;line-height:36.5px;overflow:visible;">mini pc dell 3050 i3 gen7</div>
<div class="cell" style="left:910.4px;top:715.5px;width:63.10000000000002px;height:37.5px;line-height:36.5px;overflow:visible;">1</div>
<div class="cell" style="left:989.5px;top:715.5px;width:63.5px;height:37.5px;line-height:36.5px;overflow:visible;">1200</div>
<div class="cell" style="left:1069px;top:715.5px;width:150.5px;height:37.5px;line-height:36.5px;overflow:visible;">7.08</div>
<div class="cell" style="left:1332px;top:715.5px;width:143.4000000000001px;height:37.5px;line-height:36.5px;overflow:visible;">2025-12-14 10:26:22</div>
<div class="cell" style="left:1491.4px;top:715.5px;width:143.0999999999999px;height:37.5px;line-height:36.5px;overflow:visible;">2025-12-14 10:26:23</div>
<div class="cell" style="left:1650.5px;top:715.5px;width:143.0999999999999px;height:37.5px;line-height:36.5px;overflow:visible;">2025-12-14 10:26:23</div>
<div class="cell" style="left:1888.6px;top:715.5px;width:49.40000000000009px;height:37.5px;line-height:36.5px;overflow:visible;">-</div>
<div class="cell" style="left:1227.5px;top:715.5px;width:96.5px;height:37.5px;line-height:36.5px;color:#18bc9c"><span style="display:inline-block;width:11px;height:11px;border-radius:50%;background:#18bc9c;vertical-align:-1px;margin-right:4px"></span>交易完成</div>
<div class="abs" style="left:1820px;top:727.25px;width:41px;height:16px;border-radius:3px;background:#f39c12;color:#fff;font-size:10px;font-weight:bold;line-height:16px;text-align:center">已发放</div>
<div class="abs" style="left:272px;top:762.75px;width:13px;height:13px;border:1px solid #767676;border-radius:2px;background:#fff"></div>
<div class="abs" style="left:310px;top:761.5px;width:21px;height:20px;border-radius:2px;background:#18bc9c"></div>
<svg class="abs" style="left:315.2px;top:767.25px" width="10.6" height="10" viewBox="0 0 10.5 10" preserveAspectRatio="none"><path d="M0 10L0.7 7.1L7.6 0.2L10.4 3L3.5 9.9Z" fill="#fff"/></svg>
<div class="abs" style="left:335px;top:761.5px;width:21px;height:20px;border-radius:2px;background:#e74c3c"></div>
<svg class="abs" style="left:340.3px;top:767.25px" width="9.6" height="10" viewBox="0 0 9.6 10" preserveAspectRatio="none"><g fill="#fff"><rect x="0" y="1.5" width="9.6" height="1.5"/><path d="M2.8 1.8V0.2H6.8V1.8H5.8V1.1H3.8V1.8Z"/><path d="M0.9 3.2H8.7L8.3 10H1.3Z"/></g><g fill="#e74c3c"><rect x="3" y="4.3" width="0.9" height="4.6"/><rect x="5.7" y="4.3" width="0.9" height="4.6"/></g></svg>
<div class="cell" style="left:376.6px;top:753.0px;width:157.39999999999998px;height:37.5px;line-height:36.5px;overflow:visible;">UB2512141026219345</div>
<div class="cell" style="left:550px;top:753.0px;width:64px;height:37.5px;line-height:36.5px;overflow:visible;">789789</div>
<div class="cell" style="left:630px;top:753.0px;width:64.5px;height:37.5px;line-height:36.5px;overflow:visible;">Lv 1</div>
<div class="cell" style="left:710.5px;top:753.0px;width:183.89999999999998px;height:37.5px;line-height:36.5px;overflow:visible;text-align:left;">Jurassic World Dino Trackers...</div>
<div class="cell" style="left:910.4px;top:753.0px;width:63.10000000000002px;height:37.5px;line-height:36.5px;overflow:visible;">1</div>
<div class="cell" style="left:989.5px;top:753.0px;width:63.5px;height:37.5px;line-height:36.5px;overflow:visible;">1169.9</div>
<div class="cell" style="left:1069px;top:753.0px;width:150.5px;height:37.5px;line-height:36.5px;overflow:visible;">6.9</div>
<div class="cell" style="left:1332px;top:753.0px;width:143.4000000000001px;height:37.5px;line-height:36.5px;overflow:visible;">2025-12-14 10:26:21</div>
<div class="cell" style="left:1491.4px;top:753.0px;width:143.0999999999999px;height:37.5px;line-height:36.5px;overflow:visible;">2025-12-14 10:26:22</div>
<div class="cell" style="left:1650.5px;top:753.0px;width:143.0999999999999px;height:37.5px;line-height:36.5px;overflow:visible;">2025-12-14 10:26:22</div>
<div class="cell" style="left:1888.6px;top:753.0px;width:49.40000000000009px;height:37.5px;line-height:36.5px;overflow:visible;">-</div>
<div class="cell" style="left:1227.5px;top:753.0px;width:96.5px;height:37.5px;line-height:36.5px;color:#18bc9c"><span style="display:inline-block;width:11px;height:11px;border-radius:50%;background:#18bc9c;vertical-align:-1px;margin-right:4px"></span>交易完成</div>
<div class="abs" style="left:1820px;top:764.75px;width:41px;height:16px;border-radius:3px;background:#f39c12;color:#fff;font-size:10px;font-weight:bold;line-height:16px;text-align:center">已发放</div>
<div class="abs" style="left:260px;top:808px;line-height:18px;color:#333">显示第 1 到第 15 条记录，总共 47 条记录 每页显示</div>
<div class="abs" style="left:560px;top:803px;width:50.5px;height:30.5px;border:1px solid #ddd;border-radius:3px;background:#f4f4f4;line-height:27px;color:#333;padding-left:13.5px">15<span style="display:inline-block;margin-left:3px;vertical-align:2px"><svg width="7" height="4" viewBox="0 0 7 4" ><path d="M3.5 0L7 4H0Z" fill="#333"/></svg></span></div>
<div class="abs" style="left:615px;top:808px;line-height:18px;color:#333">条记录</div>
<div class="pg" style="left:1579.5px;width:64.5px;border-radius:3px 0 0 3px;">上一页</div>
<div class="pg" style="left:1643px;width:34px;background:#2c3e50;border-color:#2c3e50;color:#fff;z-index:2;">1</div>
<div class="pg" style="left:1676px;width:33.40000000000009px;">2</div>
<div class="pg" style="left:1708.4px;width:33.19999999999982px;">3</div>
<div class="pg" style="left:1740.6px;width:33.0px;">4</div>
<div class="pg" style="left:1772.6px;width:65.40000000000009px;border-radius:0 3px 3px 0;">下一页</div>
<div class="abs" style="left:1841.5px;top:801px;width:49px;height:31px;border:1px solid #ccc;background:#fff"></div>
<div class="abs" style="left:1896.5px;top:802px;width:49px;height:31px;border:1px solid #ddd;border-radius:3px;background:#f4f4f4;line-height:26px;text-align:center;color:#333">跳转</div>
<div class="abs" style="left:1109px;top:717px;font-size:43px;line-height:52px;font-weight:500;color:#1f6bb8;white-space:nowrap">源码</div>
<div class="abs" style="left:1203px;top:719px;font-size:25px;line-height:28px;font-weight:bold;color:#5d5d5d;white-space:nowrap;transform:scaleY(.8);transform-origin:0 100%">社区</div>
<div class="abs" style="left:1203px;top:746px;font-size:16px;line-height:18px;color:#3f7dc6;white-space:nowrap">C<span style="color:#f5ad2c">O</span>MMUNITY</div>
<div class="abs" style="left:1106px;top:762px;font-family:'Liberation Serif',serif;font-size:22.5px;line-height:26px;font-weight:bold;color:#1f6bb8;white-space:nowrap">www.shequym.com</div>
<svg class="abs" style="left:1120px;top:725px" width="35" height="30" viewBox="0 0 35 30"><path d="M6.5 25C7 17 14 8 27 6" fill="none" stroke="#f5ad2c" stroke-width="1.4"/></svg>
</body></html>
